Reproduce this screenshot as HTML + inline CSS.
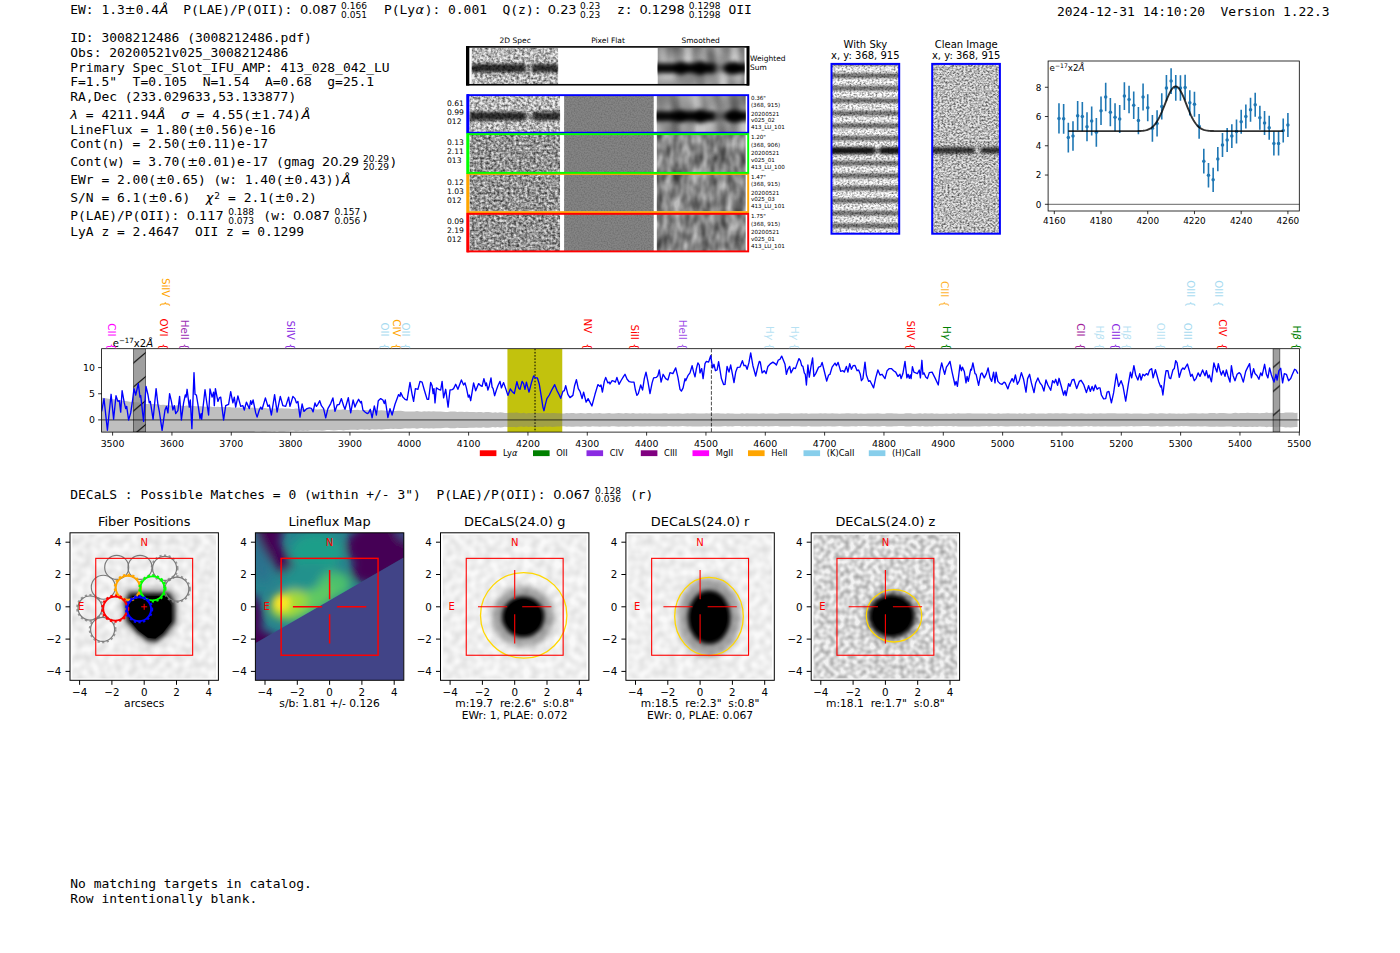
<!DOCTYPE html>
<html><head><meta charset="utf-8"><title>ELiXer detection report 3008212486</title>
<style>
html,body{margin:0;padding:0;background:#fff;}
body{width:1400px;height:953px;overflow:hidden;}
svg{display:block;}
.m{font-family:"DejaVu Sans Mono","Liberation Mono",monospace;}
.s{font-family:"DejaVu Sans","Liberation Sans",sans-serif;}
text{white-space:pre;}
</style></head><body>
<svg width="1400" height="953" viewBox="0 0 1400 953">
<defs>
<filter id="nz" x="0" y="0" width="100%" height="100%" color-interpolation-filters="sRGB">
<feTurbulence type="fractalNoise" baseFrequency="0.36 0.4" numOctaves="2" seed="3" result="t"/>
<feColorMatrix in="t" type="matrix" values="0 0 0 0 0  0 0 0 0 0  0 0 0 0 0  1.3 0 0 0 -0.42"/>
<feComposite in2="SourceGraphic" operator="in"/>
</filter>
<filter id="nzB" x="0" y="0" width="100%" height="100%" color-interpolation-filters="sRGB">
<feTurbulence type="fractalNoise" baseFrequency="0.36 0.4" numOctaves="2" seed="23" result="t"/>
<feColorMatrix in="t" type="matrix" values="0 0 0 0 0  0 0 0 0 0  0 0 0 0 0  1.15 0 0 0 -0.19"/>
<feComposite in2="SourceGraphic" operator="in"/>
</filter>
<filter id="nz2" x="0" y="0" width="100%" height="100%" color-interpolation-filters="sRGB">
<feTurbulence type="fractalNoise" baseFrequency="0.5 0.55" numOctaves="2" seed="11" result="t"/>
<feColorMatrix in="t" type="matrix" values="0 0 0 0 0  0 0 0 0 0  0 0 0 0 0  1.3 0 0 0 -0.45"/>
<feComposite in2="SourceGraphic" operator="in"/>
</filter>
<filter id="nz3" x="0" y="0" width="100%" height="100%" color-interpolation-filters="sRGB">
<feTurbulence type="fractalNoise" baseFrequency="0.5 0.55" numOctaves="2" seed="14" result="t"/>
<feColorMatrix in="t" type="matrix" values="0 0 0 0 0  0 0 0 0 0  0 0 0 0 0  1.2 0 0 0 -0.48"/>
<feComposite in2="SourceGraphic" operator="in"/>
</filter>
<filter id="nzs" x="0" y="0" width="100%" height="100%" color-interpolation-filters="sRGB">
<feTurbulence type="fractalNoise" baseFrequency="0.11 0.06" numOctaves="2" seed="5" result="t"/>
<feColorMatrix in="t" type="matrix" values="0 0 0 0 0  0 0 0 0 0  0 0 0 0 0  1.0 0 0 0 -0.2"/>
<feComposite in2="SourceGraphic" operator="in"/>
</filter>
<filter id="nzv" x="0" y="0" width="100%" height="100%" color-interpolation-filters="sRGB">
<feTurbulence type="fractalNoise" baseFrequency="0.085 0.035" numOctaves="1" seed="9" result="t"/>
<feColorMatrix in="t" type="matrix" values="0 0 0 0 0  0 0 0 0 0  0 0 0 0 0  1.1 0 0 0 -0.32"/>
<feComposite in2="SourceGraphic" operator="in"/>
</filter>
<filter id="nzf" x="0" y="0" width="100%" height="100%" color-interpolation-filters="sRGB">
<feTurbulence type="fractalNoise" baseFrequency="0.7" numOctaves="1" seed="7" result="t"/>
<feColorMatrix in="t" type="matrix" values="0 0 0 0 0  0 0 0 0 0  0 0 0 0 0  0.4 0 0 0 -0.16"/>
<feComposite in2="SourceGraphic" operator="in"/>
</filter>
<filter id="b1" x="-20%" y="-50%" width="140%" height="200%"><feGaussianBlur stdDeviation="1.6 1.4"/></filter>
<filter id="b2" x="-20%" y="-50%" width="140%" height="200%"><feGaussianBlur stdDeviation="2.6 2.0"/></filter>
<linearGradient id="band" x1="0" y1="0" x2="0" y2="1">
<stop offset="0" stop-color="#000" stop-opacity="0"/><stop offset="0.5" stop-color="#000" stop-opacity="0.85"/><stop offset="1" stop-color="#000" stop-opacity="0"/></linearGradient>

<linearGradient id="stripes" x1="0" y1="0" x2="0" y2="12.5" gradientUnits="userSpaceOnUse" spreadMethod="repeat" gradientTransform="translate(0,6.95)">
<stop offset="0" stop-color="#000" stop-opacity="0.0"/><stop offset="0.18" stop-color="#000" stop-opacity="0.03"/><stop offset="0.42" stop-color="#000" stop-opacity="0.5"/><stop offset="0.58" stop-color="#000" stop-opacity="0.5"/><stop offset="0.82" stop-color="#000" stop-opacity="0.03"/><stop offset="1" stop-color="#000" stop-opacity="0.0"/></linearGradient>
<pattern id="hat" width="28.2" height="24" patternUnits="userSpaceOnUse" patternTransform="translate(133.5,339)"><path d="M-2.82 26.4L31.02 -2.4M-2.82 2.4L2.82 -2.4M25.38 26.4L31.02 21.6" stroke="#000" stroke-width="1"/></pattern>
<pattern id="hat2" width="28.2" height="24" patternUnits="userSpaceOnUse" patternTransform="translate(1273.1,343.5)"><path d="M-2.82 26.4L31.02 -2.4M-2.82 2.4L2.82 -2.4M25.38 26.4L31.02 21.6" stroke="#000" stroke-width="1"/></pattern>
<filter id="sky" x="0" y="0" width="100%" height="100%" color-interpolation-filters="sRGB">
<feTurbulence type="fractalNoise" baseFrequency="0.13" numOctaves="1" seed="2" result="t"/>
<feColorMatrix in="t" type="matrix" values="0 0 0 0 0  0 0 0 0 0  0 0 0 0 0  0.18 0 0 0 -0.05"/>
<feComposite in2="SourceGraphic" operator="in"/></filter>
<filter id="skyz" x="0" y="0" width="100%" height="100%" color-interpolation-filters="sRGB">
<feTurbulence type="fractalNoise" baseFrequency="0.2" numOctaves="1" seed="8" result="t"/>
<feColorMatrix in="t" type="matrix" values="0 0 0 0 0  0 0 0 0 0  0 0 0 0 0  0.62 0 0 0 -0.2"/>
<feComposite in2="SourceGraphic" operator="in"/></filter>
<filter id="gb" x="-50%" y="-50%" width="200%" height="200%"><feGaussianBlur stdDeviation="3.2"/></filter>
<filter id="gb2" x="-50%" y="-50%" width="200%" height="200%"><feGaussianBlur stdDeviation="2.2"/></filter>
<filter id="lb" x="-50%" y="-50%" width="200%" height="200%"><feGaussianBlur stdDeviation="4.6"/></filter>

</defs>
<rect width="1400" height="953" fill="#fff"/>
<text class="m" x="70.30" y="13.80" font-size="12.94" xml:space="preserve">EW: 1.3</text>
<text class="s" x="124.83" y="13.80" font-size="12.94">±</text>
<text class="m" x="135.68" y="13.80" font-size="12.94" xml:space="preserve">0.4</text>
<text class="s" x="159.55" y="13.80" font-size="12.94" font-style="italic">Å</text>
<text class="m" x="183.30" y="13.80" font-size="12.94" xml:space="preserve">P(LAE)/P(OII): </text>
<text class="s" x="300.00" y="13.80" font-size="12.94">0.087</text>
<text class="s" x="341.10" y="9.00" font-size="9.06">0.166</text>
<text class="s" x="341.10" y="17.60" font-size="9.06">0.051</text>
<text class="m" x="384.00" y="13.80" font-size="12.94" xml:space="preserve">P(Ly</text>
<text class="s" x="415.46" y="13.80" font-size="12.94" font-style="italic">α</text>
<text class="m" x="424.66" y="13.80" font-size="12.94" xml:space="preserve">): 0.001  Q(z): </text>
<text class="s" x="547.80" y="13.80" font-size="12.94">0.23</text>
<text class="s" x="580.10" y="9.00" font-size="9.06">0.23</text>
<text class="s" x="580.10" y="17.60" font-size="9.06">0.23</text>
<text class="m" x="617.00" y="13.80" font-size="12.94" xml:space="preserve">z: </text>
<text class="s" x="639.40" y="13.80" font-size="12.94">0.1298</text>
<text class="s" x="688.80" y="9.00" font-size="9.06">0.1298</text>
<text class="s" x="688.80" y="17.60" font-size="9.06">0.1298</text>
<text class="m" x="728.50" y="13.80" font-size="12.94" xml:space="preserve">OII</text>
<text class="m" x="1057.00" y="16.40" font-size="12.94" xml:space="preserve">2024-12-31 14:10:20  Version 1.22.3</text>
<text class="m" x="70.30" y="42.20" font-size="12.94" xml:space="preserve">ID: 3008212486 (3008212486.pdf)</text>
<text class="m" x="70.30" y="56.70" font-size="12.94" xml:space="preserve">Obs: 20200521v025_3008212486</text>
<text class="m" x="70.30" y="71.50" font-size="12.94" xml:space="preserve">Primary Spec_Slot_IFU_AMP: 413_028_042_LU</text>
<text class="m" x="70.30" y="86.40" font-size="12.94" xml:space="preserve">F=1.5"  T=0.105  N=1.54  A=0.68  g=25.1</text>
<text class="m" x="70.30" y="101.10" font-size="12.94" xml:space="preserve">RA,Dec (233.029633,53.133877)</text>
<text class="s" x="70.30" y="118.80" font-size="12.94" font-style="italic">λ</text>
<text class="m" x="78.09" y="118.80" font-size="12.94" xml:space="preserve"> = 4211.94</text>
<text class="s" x="156.50" y="118.80" font-size="12.94" font-style="italic">Å</text>
<text class="s" x="181.00" y="118.80" font-size="12.94" font-style="italic">σ</text>
<text class="m" x="188.79" y="118.80" font-size="12.94" xml:space="preserve"> = 4.55(</text>
<text class="s" x="251.11" y="118.80" font-size="12.94">±</text>
<text class="m" x="261.95" y="118.80" font-size="12.94" xml:space="preserve">1.74)</text>
<text class="s" x="301.41" y="118.80" font-size="12.94" font-style="italic">Å</text>
<text class="m" x="70.30" y="133.50" font-size="12.94" xml:space="preserve">LineFlux = 1.80(</text>
<text class="s" x="194.95" y="133.50" font-size="12.94">±</text>
<text class="m" x="205.79" y="133.50" font-size="12.94" xml:space="preserve">0.56)e-16</text>
<text class="m" x="70.30" y="148.00" font-size="12.94" xml:space="preserve">Cont(n) = 2.50(</text>
<text class="s" x="187.16" y="148.00" font-size="12.94">±</text>
<text class="m" x="198.00" y="148.00" font-size="12.94" xml:space="preserve">0.11)e-17</text>
<text class="m" x="70.30" y="166.40" font-size="12.94" xml:space="preserve">Cont(w) = 3.70(</text>
<text class="s" x="187.16" y="166.40" font-size="12.94">±</text>
<text class="m" x="198.00" y="166.40" font-size="12.94" xml:space="preserve">0.01)e-17 (gmag </text>
<text class="s" x="322.00" y="166.40" font-size="12.94">20.29</text>
<text class="s" x="363.10" y="161.60" font-size="9.06">20.29</text>
<text class="s" x="363.10" y="170.20" font-size="9.06">20.29</text>
<text class="m" x="389.40" y="166.40" font-size="12.94" xml:space="preserve">)</text>
<text class="m" x="70.30" y="184.40" font-size="12.94" xml:space="preserve">EWr = 2.00(</text>
<text class="s" x="156.00" y="184.40" font-size="12.94">±</text>
<text class="m" x="166.84" y="184.40" font-size="12.94" xml:space="preserve">0.65) (w: 1.40(</text>
<text class="s" x="283.70" y="184.40" font-size="12.94">±</text>
<text class="m" x="294.54" y="184.40" font-size="12.94" xml:space="preserve">0.43))</text>
<text class="s" x="341.78" y="184.40" font-size="12.94" font-style="italic">Å</text>
<text class="m" x="70.30" y="201.80" font-size="12.94" xml:space="preserve">S/N = 6.1(</text>
<text class="s" x="148.21" y="201.80" font-size="12.94">±</text>
<text class="m" x="159.05" y="201.80" font-size="12.94" xml:space="preserve">0.6)  </text>
<text class="s" x="205.79" y="201.80" font-size="12.94" font-style="italic">χ</text>
<text class="s" x="214.29" y="199.00" font-size="9">2</text>
<text class="m" x="220.29" y="201.80" font-size="12.94" xml:space="preserve"> = 2.1(</text>
<text class="s" x="274.83" y="201.80" font-size="12.94">±</text>
<text class="m" x="285.67" y="201.80" font-size="12.94" xml:space="preserve">0.2)</text>
<text class="m" x="70.30" y="219.80" font-size="12.94" xml:space="preserve">P(LAE)/P(OII): </text>
<text class="s" x="186.70" y="219.80" font-size="12.94">0.117</text>
<text class="s" x="228.20" y="215.00" font-size="9.06">0.188</text>
<text class="s" x="228.20" y="223.60" font-size="9.06">0.073</text>
<text class="m" x="263.35" y="219.80" font-size="12.94" xml:space="preserve">(w: </text>
<text class="s" x="292.90" y="219.80" font-size="12.94">0.087</text>
<text class="s" x="334.40" y="215.00" font-size="9.06">0.157</text>
<text class="s" x="334.40" y="223.60" font-size="9.06">0.056</text>
<text class="m" x="361.25" y="219.80" font-size="12.94" xml:space="preserve">)</text>
<text class="m" x="70.30" y="236.00" font-size="12.94" xml:space="preserve">LyA z = 2.4647  OII z = 0.1299</text>
<text class="m" x="70.30" y="498.50" font-size="12.94" xml:space="preserve">DECaLS : Possible Matches = 0 (within +/- 3")  P(LAE)/P(OII): </text>
<text class="s" x="553.20" y="498.50" font-size="12.94">0.067</text>
<text class="s" x="595.00" y="493.70" font-size="9.06">0.128</text>
<text class="s" x="595.00" y="502.30" font-size="9.06">0.036</text>
<text class="m" x="630.00" y="498.50" font-size="12.94" xml:space="preserve">(r)</text>
<text class="m" x="70.30" y="888.30" font-size="12.94" xml:space="preserve">No matching targets in catalog.</text>
<text class="m" x="70.30" y="903.00" font-size="12.94" xml:space="preserve">Row intentionally blank.</text>
<text class="s" x="515.20" y="42.60" font-size="7.5" text-anchor="middle">2D Spec</text>
<text class="s" x="608.00" y="42.60" font-size="7.5" text-anchor="middle">Pixel Flat</text>
<text class="s" x="700.70" y="42.60" font-size="7.5" text-anchor="middle">Smoothed</text>
<clipPath id="c0"><rect x="471.50" y="48.00" width="86.80" height="36.00"/></clipPath>
<g clip-path="url(#c0)">
<rect x="471.50" y="48.00" width="86.80" height="36.00" fill="#ececec"/>
<rect x="471.50" y="48.00" width="86.80" height="36.00" fill="#000" filter="url(#nz)"/>
<g filter="url(#b1)" opacity="1.0">
<rect x="471.50" y="63.96" width="53.82" height="8.4" fill="#000" opacity="0.78"/>
<rect x="532.26" y="63.96" width="26.04" height="8.4" fill="#000" opacity="0.76"/>
<rect x="525.32" y="64.96" width="6.94" height="6" fill="#000" opacity="0.2"/>
</g>
</g>
<clipPath id="c0s"><rect x="657.50" y="48.00" width="87.20" height="36.00"/></clipPath>
<g clip-path="url(#c0s)">
<rect x="657.50" y="48.00" width="87.20" height="36.00" fill="#c4c4c4"/>
<rect x="657.50" y="48.00" width="87.20" height="36.00" fill="#000" filter="url(#nzv)"/>
<g filter="url(#b2)">
<rect x="653.50" y="63.16" width="61.55" height="10" fill="#000" opacity="0.95"/>
<ellipse cx="700.23" cy="68.16" rx="8" ry="7" fill="#000"/>
<ellipse cx="681.04" cy="68.16" rx="8" ry="6.4" fill="#000"/>
<ellipse cx="733.36" cy="68.16" rx="10" ry="6.4" fill="#000"/>
<rect x="725.52" y="63.16" width="26.16" height="10" fill="#000" opacity="0.9"/>
<rect x="715.05" y="64.16" width="10.46" height="8" fill="#000" opacity="0.35"/>
</g>
</g>
<rect x="467" y="46.9" width="281.5" height="37.85" fill="none" stroke="#000" stroke-width="1.6"/>
<rect x="466.0" y="46.1" width="3.3" height="39.45" fill="#000"/>
<rect x="746.5" y="46.1" width="2.8" height="39.45" fill="#000"/>
<text class="s" x="750.00" y="61.20" font-size="7.5">Weighted</text>
<text class="s" x="750.00" y="70.00" font-size="7.5">Sum</text>
<clipPath id="c1"><rect x="469.40" y="95.20" width="90.80" height="37.50"/></clipPath>
<g clip-path="url(#c1)">
<rect x="469.40" y="95.20" width="90.80" height="37.50" fill="#ececec"/>
<rect x="469.40" y="95.20" width="90.80" height="37.50" fill="#000" filter="url(#nz)"/>
<g filter="url(#b1)" opacity="1.0">
<rect x="469.40" y="112.00" width="56.30" height="8.4" fill="#000" opacity="0.78"/>
<rect x="532.96" y="112.00" width="27.24" height="8.4" fill="#000" opacity="0.76"/>
<rect x="525.70" y="113.00" width="7.26" height="6" fill="#000" opacity="0.2"/>
</g>
</g>
<rect x="564.10" y="95.20" width="89.60" height="37.50" fill="#848484"/>
<rect x="564.10" y="95.20" width="89.60" height="37.50" fill="#000" filter="url(#nzf)"/>
<clipPath id="c1s"><rect x="656.60" y="95.20" width="89.20" height="37.50"/></clipPath>
<g clip-path="url(#c1s)">
<rect x="656.60" y="95.20" width="89.20" height="37.50" fill="#c4c4c4"/>
<rect x="656.60" y="95.20" width="89.20" height="37.50" fill="#000" filter="url(#nzv)"/>
<g filter="url(#b2)">
<rect x="652.60" y="111.20" width="62.87" height="10" fill="#000" opacity="0.95"/>
<ellipse cx="700.31" cy="116.20" rx="8" ry="7" fill="#000"/>
<ellipse cx="680.68" cy="116.20" rx="8" ry="6.4" fill="#000"/>
<ellipse cx="734.20" cy="116.20" rx="10" ry="6.4" fill="#000"/>
<rect x="726.18" y="111.20" width="26.76" height="10" fill="#000" opacity="0.9"/>
<rect x="715.47" y="112.20" width="10.70" height="8" fill="#000" opacity="0.35"/>
</g>
</g>
<clipPath id="c2"><rect x="469.40" y="134.60" width="90.80" height="37.50"/></clipPath>
<g clip-path="url(#c2)">
<rect x="469.40" y="134.60" width="90.80" height="37.50" fill="#f0f0f0"/>
<rect x="469.40" y="134.60" width="90.80" height="37.50" fill="#000" filter="url(#nzB)"/>
</g>
<rect x="564.10" y="134.60" width="89.60" height="37.50" fill="#848484"/>
<rect x="564.10" y="134.60" width="89.60" height="37.50" fill="#000" filter="url(#nzf)"/>
<clipPath id="c2s"><rect x="656.60" y="134.60" width="89.20" height="37.50"/></clipPath>
<g clip-path="url(#c2s)">
<rect x="656.60" y="134.60" width="89.20" height="37.50" fill="#bcbcbc"/>
<rect x="656.60" y="134.60" width="89.20" height="37.50" fill="#000" filter="url(#nzs)"/>
</g>
<clipPath id="c3"><rect x="469.40" y="174.00" width="90.80" height="37.50"/></clipPath>
<g clip-path="url(#c3)">
<rect x="469.40" y="174.00" width="90.80" height="37.50" fill="#f0f0f0"/>
<rect x="469.40" y="174.00" width="90.80" height="37.50" fill="#000" filter="url(#nzB)"/>
</g>
<rect x="564.10" y="174.00" width="89.60" height="37.50" fill="#848484"/>
<rect x="564.10" y="174.00" width="89.60" height="37.50" fill="#000" filter="url(#nzf)"/>
<clipPath id="c3s"><rect x="656.60" y="174.00" width="89.20" height="37.50"/></clipPath>
<g clip-path="url(#c3s)">
<rect x="656.60" y="174.00" width="89.20" height="37.50" fill="#bcbcbc"/>
<rect x="656.60" y="174.00" width="89.20" height="37.50" fill="#000" filter="url(#nzs)"/>
</g>
<clipPath id="c4"><rect x="469.40" y="213.60" width="90.80" height="37.50"/></clipPath>
<g clip-path="url(#c4)">
<rect x="469.40" y="213.60" width="90.80" height="37.50" fill="#f0f0f0"/>
<rect x="469.40" y="213.60" width="90.80" height="37.50" fill="#000" filter="url(#nzB)"/>
</g>
<rect x="564.10" y="213.60" width="89.60" height="37.50" fill="#848484"/>
<rect x="564.10" y="213.60" width="89.60" height="37.50" fill="#000" filter="url(#nzf)"/>
<clipPath id="c4s"><rect x="656.60" y="213.60" width="89.20" height="37.50"/></clipPath>
<g clip-path="url(#c4s)">
<rect x="656.60" y="213.60" width="89.20" height="37.50" fill="#bcbcbc"/>
<rect x="656.60" y="213.60" width="89.20" height="37.50" fill="#000" filter="url(#nzs)"/>
</g>
<rect x="467.8" y="173.95" width="280.4" height="38.20" fill="none" stroke="#ffa500" stroke-width="1.9"/>
<rect x="466.3" y="173.00" width="3.0" height="40.10" fill="#ffa500"/>
<rect x="467.8" y="95.15" width="280.4" height="37.60" fill="none" stroke="#0000ff" stroke-width="1.9"/>
<rect x="466.3" y="94.20" width="3.0" height="39.50" fill="#0000ff"/>
<rect x="467.8" y="213.85" width="280.4" height="37.55" fill="none" stroke="#ff0000" stroke-width="1.9"/>
<rect x="466.3" y="212.90" width="3.0" height="39.45" fill="#ff0000"/>
<rect x="467.8" y="134.15" width="280.4" height="38.70" fill="none" stroke="#00ff00" stroke-width="1.9"/>
<rect x="466.3" y="133.20" width="3.0" height="40.60" fill="#00ff00"/>
<text class="s" x="447.00" y="105.80" font-size="7.6">0.61</text>
<text class="s" x="447.00" y="114.75" font-size="7.6">0.99</text>
<text class="s" x="447.00" y="123.70" font-size="7.6">012</text>
<text class="s" x="750.90" y="99.80" font-size="5.6">0.36"</text>
<text class="s" x="750.90" y="107.10" font-size="5.6">(368, 915)</text>
<text class="s" x="750.90" y="115.90" font-size="5.6">20200521</text>
<text class="s" x="750.90" y="122.30" font-size="5.6">v025_02</text>
<text class="s" x="750.90" y="129.40" font-size="5.6">413_LU_101</text>
<text class="s" x="447.00" y="145.20" font-size="7.6">0.13</text>
<text class="s" x="447.00" y="154.15" font-size="7.6">2.11</text>
<text class="s" x="447.00" y="163.10" font-size="7.6">013</text>
<text class="s" x="750.90" y="139.20" font-size="5.6">1.20"</text>
<text class="s" x="750.90" y="146.50" font-size="5.6">(368, 906)</text>
<text class="s" x="750.90" y="155.30" font-size="5.6">20200521</text>
<text class="s" x="750.90" y="161.70" font-size="5.6">v025_01</text>
<text class="s" x="750.90" y="168.80" font-size="5.6">413_LU_100</text>
<text class="s" x="447.00" y="184.60" font-size="7.6">0.12</text>
<text class="s" x="447.00" y="193.55" font-size="7.6">1.03</text>
<text class="s" x="447.00" y="202.50" font-size="7.6">012</text>
<text class="s" x="750.90" y="178.60" font-size="5.6">1.47"</text>
<text class="s" x="750.90" y="185.90" font-size="5.6">(368, 915)</text>
<text class="s" x="750.90" y="194.70" font-size="5.6">20200521</text>
<text class="s" x="750.90" y="201.10" font-size="5.6">v025_03</text>
<text class="s" x="750.90" y="208.20" font-size="5.6">413_LU_101</text>
<text class="s" x="447.00" y="224.20" font-size="7.6">0.09</text>
<text class="s" x="447.00" y="233.15" font-size="7.6">2.19</text>
<text class="s" x="447.00" y="242.10" font-size="7.6">012</text>
<text class="s" x="750.90" y="218.20" font-size="5.6">1.75"</text>
<text class="s" x="750.90" y="225.50" font-size="5.6">(368, 915)</text>
<text class="s" x="750.90" y="234.30" font-size="5.6">20200521</text>
<text class="s" x="750.90" y="240.70" font-size="5.6">v025_01</text>
<text class="s" x="750.90" y="247.80" font-size="5.6">413_LU_101</text>
<text class="s" x="865.30" y="47.80" font-size="10" text-anchor="middle">With Sky</text>
<text class="s" x="865.30" y="58.70" font-size="10" text-anchor="middle">x, y: 368, 915</text>
<text class="s" x="966.20" y="47.80" font-size="10" text-anchor="middle">Clean Image</text>
<text class="s" x="966.20" y="58.70" font-size="10" text-anchor="middle">x, y: 368, 915</text>
<clipPath id="cs"><rect x="831.6" y="64.0" width="67.5" height="169.6"/></clipPath><g clip-path="url(#cs)">
<rect x="831.60" y="64.00" width="67.50" height="169.60" fill="#ffffff"/>
<rect x="831.60" y="64.00" width="67.50" height="169.60" fill="#000" filter="url(#nz3)"/>
<rect x="831.6" y="64.0" width="67.5" height="169.6" fill="url(#stripes)"/>
<g filter="url(#b1)"><rect x="828.6" y="146.9" width="45.525" height="7.4" fill="#000" opacity="0.8"/><rect x="880.2" y="146.9" width="23.25" height="7.4" fill="#000" opacity="0.8"/></g>
</g>
<rect x="831.5" y="63.9" width="67.7" height="169.79999999999998" fill="none" stroke="#0000ff" stroke-width="2"/>
<clipPath id="cc"><rect x="932.3" y="64.0" width="67.5" height="169.6"/></clipPath><g clip-path="url(#cc)">
<rect x="932.30" y="64.00" width="67.50" height="169.60" fill="#e6e6e6"/>
<rect x="932.30" y="64.00" width="67.50" height="169.60" fill="#000" filter="url(#nz2)"/>
<g filter="url(#b1)"><rect x="929.3" y="147.2" width="45.525" height="6.4" fill="#000" opacity="0.75"/><rect x="980.9" y="147.2" width="23.25" height="6.4" fill="#000" opacity="0.75"/></g>
</g>
<rect x="932.1999999999999" y="63.9" width="67.7" height="169.79999999999998" fill="none" stroke="#0000ff" stroke-width="2"/>
<rect x="1048.1" y="61.0" width="251.20" height="150.00" fill="#fff"/>
<line x1="1048.1" y1="204.30" x2="1299.3" y2="204.30" stroke="#000" stroke-width="1" opacity="0.6"/>
<path d="M1058.97 103.35V133.49M1063.64 103.88V133.84M1068.32 122.69V152.48M1072.99 121.17V150.78M1077.66 100.92V130.36M1082.33 101.89V131.15M1087.00 112.22V141.30M1091.68 106.60V135.51M1096.35 117.95V146.69M1101.02 96.39V124.95M1105.69 82.87V111.25M1110.36 98.03V126.23M1115.04 103.24V131.27M1119.71 105.08V132.93M1124.38 82.20V109.88M1129.05 85.65V113.16M1133.72 91.59V118.92M1138.40 107.04V134.19M1143.07 83.57V110.55M1147.74 94.34V121.14M1152.41 115.06V141.68M1157.08 110.17V136.62M1161.76 93.29V119.56M1166.43 74.94V101.04M1171.10 68.15V94.08M1175.77 75.12V100.87M1180.44 75.20V100.78M1185.12 74.85V100.25M1189.79 90.16V115.38M1194.46 91.71V116.75M1199.13 113.89V138.76M1203.80 148.79V173.49M1208.48 163.07V187.59M1213.15 167.70V192.04M1217.82 147.01V171.18M1222.49 133.05V157.05M1227.16 128.08V152.07M1231.84 124.13V148.12M1236.51 119.45V143.44M1241.18 109.79V133.78M1245.85 104.52V128.52M1250.52 97.65V121.64M1255.20 92.67V116.67M1259.87 105.69V129.69M1264.54 110.96V134.95M1269.21 115.79V139.78M1273.88 131.44V155.44M1278.56 131.44V155.44M1283.23 118.42V142.42M1287.90 113.01V137.00" stroke="#1f77b4" stroke-width="1.6" fill="none"/>
<circle cx="1058.97" cy="118.42" r="1.75" fill="#1f77b4"/>
<circle cx="1063.64" cy="118.86" r="1.75" fill="#1f77b4"/>
<circle cx="1068.32" cy="137.59" r="1.75" fill="#1f77b4"/>
<circle cx="1072.99" cy="135.98" r="1.75" fill="#1f77b4"/>
<circle cx="1077.66" cy="115.64" r="1.75" fill="#1f77b4"/>
<circle cx="1082.33" cy="116.52" r="1.75" fill="#1f77b4"/>
<circle cx="1087.00" cy="126.76" r="1.75" fill="#1f77b4"/>
<circle cx="1091.68" cy="121.06" r="1.75" fill="#1f77b4"/>
<circle cx="1096.35" cy="132.32" r="1.75" fill="#1f77b4"/>
<circle cx="1101.02" cy="110.67" r="1.75" fill="#1f77b4"/>
<circle cx="1105.69" cy="97.06" r="1.75" fill="#1f77b4"/>
<circle cx="1110.36" cy="112.13" r="1.75" fill="#1f77b4"/>
<circle cx="1115.04" cy="117.25" r="1.75" fill="#1f77b4"/>
<circle cx="1119.71" cy="119.01" r="1.75" fill="#1f77b4"/>
<circle cx="1124.38" cy="96.04" r="1.75" fill="#1f77b4"/>
<circle cx="1129.05" cy="99.40" r="1.75" fill="#1f77b4"/>
<circle cx="1133.72" cy="105.25" r="1.75" fill="#1f77b4"/>
<circle cx="1138.40" cy="120.62" r="1.75" fill="#1f77b4"/>
<circle cx="1143.07" cy="97.06" r="1.75" fill="#1f77b4"/>
<circle cx="1147.74" cy="107.74" r="1.75" fill="#1f77b4"/>
<circle cx="1152.41" cy="128.37" r="1.75" fill="#1f77b4"/>
<circle cx="1157.08" cy="123.40" r="1.75" fill="#1f77b4"/>
<circle cx="1161.76" cy="106.43" r="1.75" fill="#1f77b4"/>
<circle cx="1166.43" cy="87.99" r="1.75" fill="#1f77b4"/>
<circle cx="1171.10" cy="81.12" r="1.75" fill="#1f77b4"/>
<circle cx="1175.77" cy="87.99" r="1.75" fill="#1f77b4"/>
<circle cx="1180.44" cy="87.99" r="1.75" fill="#1f77b4"/>
<circle cx="1185.12" cy="87.55" r="1.75" fill="#1f77b4"/>
<circle cx="1189.79" cy="102.77" r="1.75" fill="#1f77b4"/>
<circle cx="1194.46" cy="104.23" r="1.75" fill="#1f77b4"/>
<circle cx="1199.13" cy="126.32" r="1.75" fill="#1f77b4"/>
<circle cx="1203.80" cy="161.14" r="1.75" fill="#1f77b4"/>
<circle cx="1208.48" cy="175.33" r="1.75" fill="#1f77b4"/>
<circle cx="1213.15" cy="179.87" r="1.75" fill="#1f77b4"/>
<circle cx="1217.82" cy="159.09" r="1.75" fill="#1f77b4"/>
<circle cx="1222.49" cy="145.05" r="1.75" fill="#1f77b4"/>
<circle cx="1227.16" cy="140.07" r="1.75" fill="#1f77b4"/>
<circle cx="1231.84" cy="136.12" r="1.75" fill="#1f77b4"/>
<circle cx="1236.51" cy="131.44" r="1.75" fill="#1f77b4"/>
<circle cx="1241.18" cy="121.79" r="1.75" fill="#1f77b4"/>
<circle cx="1245.85" cy="116.52" r="1.75" fill="#1f77b4"/>
<circle cx="1250.52" cy="109.64" r="1.75" fill="#1f77b4"/>
<circle cx="1255.20" cy="104.67" r="1.75" fill="#1f77b4"/>
<circle cx="1259.87" cy="117.69" r="1.75" fill="#1f77b4"/>
<circle cx="1264.54" cy="122.96" r="1.75" fill="#1f77b4"/>
<circle cx="1269.21" cy="127.79" r="1.75" fill="#1f77b4"/>
<circle cx="1273.88" cy="143.44" r="1.75" fill="#1f77b4"/>
<circle cx="1278.56" cy="143.44" r="1.75" fill="#1f77b4"/>
<circle cx="1283.23" cy="130.42" r="1.75" fill="#1f77b4"/>
<circle cx="1287.90" cy="125.01" r="1.75" fill="#1f77b4"/>
<polyline points="1068.32,131.15 1069.48,131.15 1070.65,131.15 1071.82,131.15 1072.99,131.15 1074.16,131.15 1075.32,131.15 1076.49,131.15 1077.66,131.15 1078.83,131.15 1080.00,131.15 1081.16,131.15 1082.33,131.15 1083.50,131.15 1084.67,131.15 1085.84,131.15 1087.00,131.15 1088.17,131.15 1089.34,131.15 1090.51,131.15 1091.68,131.15 1092.84,131.15 1094.01,131.15 1095.18,131.15 1096.35,131.15 1097.52,131.15 1098.68,131.15 1099.85,131.15 1101.02,131.15 1102.19,131.15 1103.36,131.15 1104.52,131.15 1105.69,131.15 1106.86,131.15 1108.03,131.15 1109.20,131.15 1110.36,131.15 1111.53,131.15 1112.70,131.15 1113.87,131.15 1115.04,131.15 1116.20,131.15 1117.37,131.15 1118.54,131.15 1119.71,131.15 1120.88,131.15 1122.04,131.15 1123.21,131.15 1124.38,131.15 1125.55,131.15 1126.72,131.15 1127.88,131.15 1129.05,131.15 1130.22,131.15 1131.39,131.14 1132.56,131.14 1133.72,131.13 1134.89,131.12 1136.06,131.11 1137.23,131.08 1138.40,131.05 1139.56,131.01 1140.73,130.95 1141.90,130.86 1143.07,130.74 1144.24,130.58 1145.40,130.37 1146.57,130.08 1147.74,129.72 1148.91,129.25 1150.08,128.66 1151.24,127.93 1152.41,127.03 1153.58,125.95 1154.75,124.65 1155.92,123.14 1157.08,121.38 1158.25,119.39 1159.42,117.16 1160.59,114.71 1161.76,112.06 1162.92,109.24 1164.09,106.32 1165.26,103.34 1166.43,100.38 1167.60,97.51 1168.76,94.82 1169.93,92.38 1171.10,90.27 1172.27,88.57 1173.44,87.33 1174.60,86.59 1175.77,86.39 1176.94,86.72 1178.11,87.58 1179.28,88.94 1180.44,90.74 1181.61,92.94 1182.78,95.44 1183.95,98.19 1185.12,101.08 1186.28,104.06 1187.45,107.03 1188.62,109.93 1189.79,112.71 1190.96,115.32 1192.12,117.72 1193.29,119.89 1194.46,121.83 1195.63,123.52 1196.80,124.98 1197.96,126.23 1199.13,127.26 1200.30,128.12 1201.47,128.82 1202.64,129.37 1203.80,129.82 1204.97,130.16 1206.14,130.42 1207.31,130.62 1208.48,130.77 1209.64,130.88 1210.81,130.96 1211.98,131.02 1213.15,131.06 1214.32,131.09 1215.48,131.11 1216.65,131.12 1217.82,131.13 1218.99,131.14 1220.16,131.14 1221.32,131.15 1222.49,131.15 1223.66,131.15 1224.83,131.15 1226.00,131.15 1227.16,131.15 1228.33,131.15 1229.50,131.15 1230.67,131.15 1231.84,131.15 1233.00,131.15 1234.17,131.15 1235.34,131.15 1236.51,131.15 1237.68,131.15 1238.84,131.15 1240.01,131.15 1241.18,131.15 1242.35,131.15 1243.52,131.15 1244.68,131.15 1245.85,131.15 1247.02,131.15 1248.19,131.15 1249.36,131.15 1250.52,131.15 1251.69,131.15 1252.86,131.15 1254.03,131.15 1255.20,131.15 1256.36,131.15 1257.53,131.15 1258.70,131.15 1259.87,131.15 1261.04,131.15 1262.20,131.15 1263.37,131.15 1264.54,131.15 1265.71,131.15 1266.88,131.15 1268.04,131.15 1269.21,131.15 1270.38,131.15 1271.55,131.15 1272.72,131.15 1273.88,131.15 1275.05,131.15 1276.22,131.15 1277.39,131.15 1278.56,131.15 1279.72,131.15 1280.89,131.15 1282.06,131.15 1283.23,131.15" fill="none" stroke="#000" stroke-opacity="0.8" stroke-width="1.9" stroke-linejoin="round"/>
<rect x="1048.1" y="61.0" width="251.20" height="150.00" fill="none" stroke="#000" stroke-width="0.8"/>
<text class="s" x="1054.30" y="224.30" font-size="8.9" text-anchor="middle">4160</text>
<text class="s" x="1101.02" y="224.30" font-size="8.9" text-anchor="middle">4180</text>
<text class="s" x="1147.74" y="224.30" font-size="8.9" text-anchor="middle">4200</text>
<text class="s" x="1194.46" y="224.30" font-size="8.9" text-anchor="middle">4220</text>
<text class="s" x="1241.18" y="224.30" font-size="8.9" text-anchor="middle">4240</text>
<text class="s" x="1287.90" y="224.30" font-size="8.9" text-anchor="middle">4260</text>
<text class="s" x="1041.40" y="207.60" font-size="8.9" text-anchor="end">0</text>
<text class="s" x="1041.40" y="178.34" font-size="8.9" text-anchor="end">2</text>
<text class="s" x="1041.40" y="149.08" font-size="8.9" text-anchor="end">4</text>
<text class="s" x="1041.40" y="119.82" font-size="8.9" text-anchor="end">6</text>
<text class="s" x="1041.40" y="90.56" font-size="8.9" text-anchor="end">8</text>
<path d="M1054.30 211.0v3.2M1101.02 211.0v3.2M1147.74 211.0v3.2M1194.46 211.0v3.2M1241.18 211.0v3.2M1287.90 211.0v3.2M1048.1 204.30h-3.2M1048.1 175.04h-3.2M1048.1 145.78h-3.2M1048.1 116.52h-3.2M1048.1 87.26h-3.2" stroke="#000" stroke-width="0.8"/>
<text class="s" x="1049.60" y="71.40" font-size="8.7">e<tspan font-size="6.09" dy="-3.22">−17</tspan><tspan dy="3.22">x2</tspan><tspan font-style="italic">Å</tspan></text>
<clipPath id="csp"><rect x="101.6" y="348.7" width="1197.90" height="83.40"/></clipPath>
<g clip-path="url(#csp)">
<rect x="507.42" y="348.7" width="54.83" height="83.40" fill="#bfbf00" fill-opacity="0.95"/>
<polygon points="101.3,397.6 103.7,398.0 106.1,398.2 108.4,398.7 110.8,399.1 113.2,399.2 115.6,399.2 117.9,399.7 120.3,400.0 122.7,400.7 125.1,400.9 127.4,401.3 129.8,401.7 132.2,402.1 134.6,402.3 136.9,402.2 139.3,402.6 141.7,402.9 144.0,403.2 146.4,403.9 148.8,404.1 151.2,404.0 153.5,404.1 155.9,404.2 158.3,404.3 160.7,404.9 163.0,404.8 165.4,404.9 167.8,405.1 170.2,405.5 172.5,405.4 174.9,405.7 177.3,405.3 179.6,405.4 182.0,405.7 184.4,405.9 186.8,405.6 189.1,405.9 191.5,405.8 193.9,405.9 196.3,406.2 198.6,406.3 201.0,406.3 203.4,406.5 205.8,406.7 208.1,406.7 210.5,406.5 212.9,407.0 215.2,407.1 217.6,406.8 220.0,407.1 222.4,407.0 224.7,407.1 227.1,407.3 229.5,407.0 231.9,407.6 234.2,407.5 236.6,407.7 239.0,407.5 241.4,407.7 243.7,407.7 246.1,407.6 248.5,407.9 250.9,407.8 253.2,407.6 255.6,408.2 258.0,408.3 260.3,408.2 262.7,408.0 265.1,408.1 267.5,408.4 269.8,408.4 272.2,408.6 274.6,408.4 277.0,408.8 279.3,408.4 281.7,408.3 284.1,408.4 286.5,408.6 288.8,408.5 291.2,409.1 293.6,409.0 295.9,408.6 298.3,408.8 300.7,409.0 303.1,408.7 305.4,409.0 307.8,408.9 310.2,409.2 312.6,409.3 314.9,409.2 317.3,409.4 319.7,409.3 322.1,409.0 324.4,409.4 326.8,409.7 329.2,409.7 331.5,409.6 333.9,409.3 336.3,409.6 338.7,409.7 341.0,409.8 343.4,409.3 345.8,409.7 348.2,409.9 350.5,410.0 352.9,410.1 355.3,410.1 357.7,409.8 360.0,410.2 362.4,410.3 364.8,410.1 367.1,410.3 369.5,409.9 371.9,410.5 374.3,410.3 376.6,410.2 379.0,410.5 381.4,410.2 383.8,410.6 386.1,410.8 388.5,410.8 390.9,411.1 393.3,410.9 395.6,411.1 398.0,410.7 400.4,410.8 402.7,411.1 405.1,411.5 407.5,411.4 409.9,411.4 412.2,411.5 414.6,411.5 417.0,411.1 419.4,411.6 421.7,411.7 424.1,411.2 426.5,411.5 428.9,411.2 431.2,411.6 433.6,411.3 436.0,411.5 438.3,411.5 440.7,411.5 443.1,411.7 445.5,412.0 447.8,412.0 450.2,411.6 452.6,411.6 455.0,411.6 457.3,412.0 459.7,411.8 462.1,411.8 464.5,411.9 466.8,411.8 469.2,412.0 471.6,412.0 474.0,412.0 476.3,412.3 478.7,412.0 481.1,412.0 483.4,412.6 485.8,412.1 488.2,412.1 490.6,412.3 492.9,412.8 495.3,412.3 497.7,412.8 500.1,412.3 502.4,412.5 504.8,413.0 507.2,412.9 509.6,412.7 511.9,412.8 514.3,412.7 516.7,412.6 519.0,413.1 521.4,413.3 523.8,412.8 526.2,413.4 528.5,412.9 530.9,413.3 533.3,412.9 535.7,412.9 538.0,412.9 540.4,413.1 542.8,412.9 545.2,413.3 547.5,413.0 549.9,413.3 552.3,412.9 554.6,413.0 557.0,413.2 559.4,413.2 561.8,413.5 564.1,413.5 566.5,413.1 568.9,413.2 571.3,413.0 573.6,413.1 576.0,413.4 578.4,413.3 580.8,413.1 583.1,413.2 585.5,413.5 587.9,413.0 590.2,413.0 592.6,413.5 595.0,413.2 597.4,413.3 599.7,413.1 602.1,413.4 604.5,413.4 606.9,413.3 609.2,413.0 611.6,413.6 614.0,413.5 616.4,413.2 618.7,413.1 621.1,413.3 623.5,413.4 625.8,413.1 628.2,413.2 630.6,413.6 633.0,413.1 635.3,413.5 637.7,413.5 640.1,413.2 642.5,413.4 644.8,413.2 647.2,413.6 649.6,413.2 652.0,413.6 654.3,413.6 656.7,413.4 659.1,413.5 661.4,413.4 663.8,413.2 666.2,413.3 668.6,413.7 670.9,413.6 673.3,413.4 675.7,413.5 678.1,413.3 680.4,413.5 682.8,413.7 685.2,413.6 687.6,413.3 689.9,413.6 692.3,413.3 694.7,413.2 697.0,413.4 699.4,413.4 701.8,413.4 704.2,413.6 706.5,413.3 708.9,413.5 711.3,413.3 713.7,413.6 716.0,413.3 718.4,413.3 720.8,413.4 723.2,413.6 725.5,413.7 727.9,413.3 730.3,413.6 732.7,413.4 735.0,413.7 737.4,413.8 739.8,413.7 742.1,413.3 744.5,413.7 746.9,413.3 749.3,413.6 751.6,413.5 754.0,413.6 756.4,413.4 758.8,413.8 761.1,413.6 763.5,413.2 765.9,413.7 768.3,413.4 770.6,413.6 773.0,413.6 775.4,413.8 777.7,413.8 780.1,413.2 782.5,413.3 784.9,413.3 787.2,413.3 789.6,413.2 792.0,413.7 794.4,413.5 796.7,413.5 799.1,413.5 801.5,413.2 803.9,413.4 806.2,413.2 808.6,413.8 811.0,413.4 813.3,413.4 815.7,413.4 818.1,413.4 820.5,413.3 822.8,413.6 825.2,413.3 827.6,413.6 830.0,413.5 832.3,413.3 834.7,413.4 837.1,413.6 839.5,413.7 841.8,413.6 844.2,413.4 846.6,413.2 848.9,413.3 851.3,413.6 853.7,413.6 856.1,413.3 858.4,413.7 860.8,413.6 863.2,413.8 865.6,413.7 867.9,413.5 870.3,413.4 872.7,413.4 875.1,413.6 877.4,413.2 879.8,413.4 882.2,413.7 884.5,413.8 886.9,413.2 889.3,413.2 891.7,413.3 894.0,413.5 896.4,413.6 898.8,413.8 901.2,413.7 903.5,413.7 905.9,413.3 908.3,413.3 910.7,413.3 913.0,413.7 915.4,413.7 917.8,413.6 920.1,413.2 922.5,413.7 924.9,413.3 927.3,413.4 929.6,413.5 932.0,413.2 934.4,413.7 936.8,413.5 939.1,413.7 941.5,413.8 943.9,413.8 946.3,413.6 948.6,413.8 951.0,413.8 953.4,413.2 955.8,413.7 958.1,413.3 960.5,413.4 962.9,413.4 965.2,413.4 967.6,413.2 970.0,413.3 972.4,413.4 974.7,413.5 977.1,413.4 979.5,413.4 981.9,413.5 984.2,413.5 986.6,413.7 989.0,413.3 991.4,413.5 993.7,413.8 996.1,413.7 998.5,413.3 1000.8,413.7 1003.2,413.6 1005.6,413.4 1008.0,413.3 1010.3,413.6 1012.7,413.6 1015.1,413.6 1017.5,413.8 1019.8,413.3 1022.2,413.8 1024.6,413.2 1027.0,413.7 1029.3,413.7 1031.7,413.3 1034.1,413.3 1036.4,413.7 1038.8,413.5 1041.2,413.5 1043.6,413.4 1045.9,413.7 1048.3,413.3 1050.7,413.2 1053.1,413.4 1055.4,413.3 1057.8,413.2 1060.2,413.6 1062.6,413.3 1064.9,413.3 1067.3,413.5 1069.7,413.8 1072.0,413.4 1074.4,413.3 1076.8,413.6 1079.2,413.4 1081.5,413.3 1083.9,413.5 1086.3,413.8 1088.7,413.4 1091.0,413.7 1093.4,413.3 1095.8,413.4 1098.2,413.6 1100.5,413.3 1102.9,413.4 1105.3,413.6 1107.6,413.3 1110.0,413.3 1112.4,413.3 1114.8,413.3 1117.1,413.4 1119.5,413.4 1121.9,413.5 1124.3,413.5 1126.6,413.2 1129.0,413.6 1131.4,413.8 1133.8,413.4 1136.1,413.5 1138.5,413.5 1140.9,413.5 1143.2,413.7 1145.6,413.7 1148.0,413.8 1150.4,413.3 1152.7,413.3 1155.1,413.4 1157.5,413.8 1159.9,413.2 1162.2,413.3 1164.6,413.5 1167.0,413.8 1169.4,413.3 1171.7,413.4 1174.1,413.4 1176.5,413.8 1178.8,413.4 1181.2,413.8 1183.6,413.5 1186.0,413.7 1188.3,413.5 1190.7,413.2 1193.1,413.3 1195.5,413.2 1197.8,413.5 1200.2,413.4 1202.6,413.3 1205.0,413.6 1207.3,413.4 1209.7,413.0 1212.1,413.1 1214.5,413.0 1216.8,413.4 1219.2,413.1 1221.6,413.0 1223.9,413.1 1226.3,413.2 1228.7,413.4 1231.1,413.4 1233.4,412.9 1235.8,412.8 1238.2,413.2 1240.6,412.9 1242.9,413.1 1245.3,412.9 1247.7,412.8 1250.1,413.1 1252.4,412.9 1254.8,413.1 1257.2,412.9 1259.5,413.2 1261.9,413.0 1264.3,413.0 1266.7,412.6 1269.0,413.1 1271.4,412.7 1273.8,413.1 1276.2,412.5 1278.5,413.0 1280.9,413.0 1283.3,412.9 1285.7,412.4 1288.0,412.6 1290.4,412.4 1292.8,412.6 1295.1,412.9 1297.5,412.7 1297.5,427.1 1295.1,426.9 1292.8,427.2 1290.4,427.4 1288.0,427.2 1285.7,427.4 1283.3,426.9 1280.9,426.8 1278.5,426.8 1276.2,427.3 1273.8,426.7 1271.4,427.1 1269.0,426.7 1266.7,427.2 1264.3,426.8 1261.9,426.8 1259.5,426.6 1257.2,426.9 1254.8,426.7 1252.4,426.9 1250.1,426.7 1247.7,427.0 1245.3,426.9 1242.9,426.7 1240.6,426.9 1238.2,426.6 1235.8,427.0 1233.4,426.9 1231.1,426.4 1228.7,426.4 1226.3,426.6 1223.9,426.7 1221.6,426.8 1219.2,426.7 1216.8,426.4 1214.5,426.8 1212.1,426.7 1209.7,426.8 1207.3,426.4 1205.0,426.2 1202.6,426.5 1200.2,426.4 1197.8,426.3 1195.5,426.6 1193.1,426.5 1190.7,426.6 1188.3,426.3 1186.0,426.1 1183.6,426.3 1181.2,426.0 1178.8,426.4 1176.5,426.0 1174.1,426.4 1171.7,426.4 1169.4,426.5 1167.0,426.0 1164.6,426.3 1162.2,426.5 1159.9,426.6 1157.5,426.0 1155.1,426.4 1152.7,426.5 1150.4,426.5 1148.0,426.0 1145.6,426.1 1143.2,426.1 1140.9,426.3 1138.5,426.3 1136.1,426.3 1133.8,426.4 1131.4,426.0 1129.0,426.2 1126.6,426.6 1124.3,426.3 1121.9,426.3 1119.5,426.4 1117.1,426.4 1114.8,426.5 1112.4,426.5 1110.0,426.5 1107.6,426.5 1105.3,426.2 1102.9,426.4 1100.5,426.5 1098.2,426.2 1095.8,426.4 1093.4,426.5 1091.0,426.1 1088.7,426.4 1086.3,426.0 1083.9,426.3 1081.5,426.5 1079.2,426.4 1076.8,426.2 1074.4,426.5 1072.0,426.4 1069.7,426.0 1067.3,426.3 1064.9,426.5 1062.6,426.5 1060.2,426.2 1057.8,426.6 1055.4,426.5 1053.1,426.4 1050.7,426.6 1048.3,426.5 1045.9,426.1 1043.6,426.4 1041.2,426.3 1038.8,426.3 1036.4,426.1 1034.1,426.5 1031.7,426.5 1029.3,426.1 1027.0,426.1 1024.6,426.6 1022.2,426.0 1019.8,426.5 1017.5,426.0 1015.1,426.2 1012.7,426.2 1010.3,426.2 1008.0,426.5 1005.6,426.4 1003.2,426.2 1000.8,426.1 998.5,426.5 996.1,426.1 993.7,426.0 991.4,426.3 989.0,426.5 986.6,426.1 984.2,426.3 981.9,426.3 979.5,426.4 977.1,426.4 974.7,426.3 972.4,426.4 970.0,426.5 967.6,426.6 965.2,426.4 962.9,426.4 960.5,426.4 958.1,426.5 955.8,426.1 953.4,426.6 951.0,426.0 948.6,426.0 946.3,426.2 943.9,426.0 941.5,426.0 939.1,426.1 936.8,426.3 934.4,426.1 932.0,426.6 929.6,426.3 927.3,426.4 924.9,426.5 922.5,426.1 920.1,426.6 917.8,426.2 915.4,426.1 913.0,426.1 910.7,426.5 908.3,426.5 905.9,426.5 903.5,426.1 901.2,426.1 898.8,426.0 896.4,426.2 894.0,426.3 891.7,426.5 889.3,426.6 886.9,426.6 884.5,426.0 882.2,426.1 879.8,426.4 877.4,426.6 875.1,426.2 872.7,426.4 870.3,426.4 867.9,426.3 865.6,426.1 863.2,426.0 860.8,426.2 858.4,426.1 856.1,426.5 853.7,426.2 851.3,426.2 848.9,426.5 846.6,426.6 844.2,426.4 841.8,426.2 839.5,426.1 837.1,426.2 834.7,426.4 832.3,426.5 830.0,426.3 827.6,426.2 825.2,426.5 822.8,426.2 820.5,426.5 818.1,426.4 815.7,426.4 813.3,426.4 811.0,426.4 808.6,426.0 806.2,426.6 803.9,426.4 801.5,426.6 799.1,426.3 796.7,426.3 794.4,426.3 792.0,426.1 789.6,426.6 787.2,426.5 784.9,426.5 782.5,426.5 780.1,426.6 777.7,426.0 775.4,426.0 773.0,426.2 770.6,426.2 768.3,426.4 765.9,426.1 763.5,426.6 761.1,426.2 758.8,426.0 756.4,426.4 754.0,426.2 751.6,426.3 749.3,426.2 746.9,426.5 744.5,426.1 742.1,426.5 739.8,426.1 737.4,426.0 735.0,426.1 732.7,426.4 730.3,426.2 727.9,426.5 725.5,426.1 723.2,426.2 720.8,426.4 718.4,426.5 716.0,426.5 713.7,426.2 711.3,426.5 708.9,426.3 706.5,426.5 704.2,426.2 701.8,426.4 699.4,426.4 697.0,426.4 694.7,426.6 692.3,426.5 689.9,426.2 687.6,426.5 685.2,426.2 682.8,426.1 680.4,426.3 678.1,426.5 675.7,426.3 673.3,426.4 670.9,426.2 668.6,426.1 666.2,426.5 663.8,426.6 661.4,426.4 659.1,426.3 656.7,426.4 654.3,426.2 652.0,426.2 649.6,426.6 647.2,426.2 644.8,426.6 642.5,426.4 640.1,426.6 637.7,426.3 635.3,426.3 633.0,426.7 630.6,426.2 628.2,426.6 625.8,426.7 623.5,426.4 621.1,426.5 618.7,426.7 616.4,426.6 614.0,426.3 611.6,426.2 609.2,426.8 606.9,426.5 604.5,426.4 602.1,426.4 599.7,426.7 597.4,426.5 595.0,426.6 592.6,426.3 590.2,426.8 587.9,426.8 585.5,426.3 583.1,426.6 580.8,426.7 578.4,426.5 576.0,426.4 573.6,426.7 571.3,426.8 568.9,426.6 566.5,426.7 564.1,426.3 561.8,426.3 559.4,426.6 557.0,426.6 554.6,426.8 552.3,426.9 549.9,426.5 547.5,426.8 545.2,426.5 542.8,426.9 540.4,426.7 538.0,426.9 535.7,426.9 533.3,426.9 530.9,426.5 528.5,426.9 526.2,426.4 523.8,427.0 521.4,426.5 519.0,426.7 516.7,427.2 514.3,427.1 511.9,427.0 509.6,427.1 507.2,426.9 504.8,426.8 502.4,427.3 500.1,427.5 497.7,427.0 495.3,427.5 492.9,427.0 490.6,427.5 488.2,427.7 485.8,427.7 483.4,427.2 481.1,427.8 478.7,427.8 476.3,427.5 474.0,427.8 471.6,427.8 469.2,427.8 466.8,428.0 464.5,427.9 462.1,428.0 459.7,428.0 457.3,427.8 455.0,428.2 452.6,428.2 450.2,428.2 447.8,427.8 445.5,427.8 443.1,428.1 440.7,428.3 438.3,428.3 436.0,428.3 433.6,428.5 431.2,428.2 428.9,428.6 426.5,428.3 424.1,428.6 421.7,428.1 419.4,428.2 417.0,428.7 414.6,428.3 412.2,428.3 409.9,428.4 407.5,428.4 405.1,428.3 402.7,428.7 400.4,429.0 398.0,429.1 395.6,428.7 393.3,428.9 390.9,428.7 388.5,429.0 386.1,429.0 383.8,429.2 381.4,429.6 379.0,429.3 376.6,429.6 374.3,429.5 371.9,429.3 369.5,429.9 367.1,429.5 364.8,429.7 362.4,429.5 360.0,429.6 357.7,430.0 355.3,429.7 352.9,429.7 350.5,429.8 348.2,429.9 345.8,430.1 343.4,430.5 341.0,430.0 338.7,430.1 336.3,430.2 333.9,430.5 331.5,430.2 329.2,430.1 326.8,430.1 324.4,430.4 322.1,430.8 319.7,430.5 317.3,430.4 314.9,430.6 312.6,430.5 310.2,430.6 307.8,430.9 305.4,430.8 303.1,431.1 300.7,430.8 298.3,431.0 295.9,431.2 293.6,430.8 291.2,430.7 288.8,431.3 286.5,431.2 284.1,431.4 281.7,431.5 279.3,431.4 277.0,431.0 274.6,431.4 272.2,431.2 269.8,431.4 267.5,431.4 265.1,431.7 262.7,431.8 260.3,431.6 258.0,431.5 255.6,431.6 253.2,432.2 250.9,432.0 248.5,431.9 246.1,432.2 243.7,432.1 241.4,432.1 239.0,432.3 236.6,432.1 234.2,432.3 231.9,432.2 229.5,432.8 227.1,432.5 224.7,432.7 222.4,432.8 220.0,432.7 217.6,433.0 215.2,432.7 212.9,432.8 210.5,433.3 208.1,433.1 205.8,433.1 203.4,433.3 201.0,433.5 198.6,433.5 196.3,433.6 193.9,433.9 191.5,434.0 189.1,433.9 186.8,434.2 184.4,433.9 182.0,434.1 179.6,434.4 177.3,434.5 174.9,434.1 172.5,434.4 170.2,434.3 167.8,434.7 165.4,434.9 163.0,435.0 160.7,434.9 158.3,435.5 155.9,435.6 153.5,435.7 151.2,435.8 148.8,435.7 146.4,435.9 144.0,436.6 141.7,436.9 139.3,437.2 136.9,437.6 134.6,437.5 132.2,437.7 129.8,438.1 127.4,438.5 125.1,438.9 122.7,439.1 120.3,439.8 117.9,440.1 115.6,440.6 113.2,440.6 110.8,440.7 108.4,441.1 106.1,441.6 103.7,441.8 101.3,442.2" fill="#808080" fill-opacity="0.5"/>
<rect x="133.5" y="348.7" width="12.10" height="83.40" fill="#808080" fill-opacity="0.75"/>
<rect x="133.5" y="348.7" width="12.10" height="83.40" fill="url(#hat)" stroke="#000" stroke-opacity="0.6" stroke-width="0.8"/>
<rect x="1273.1" y="348.7" width="6.70" height="83.40" fill="#808080" fill-opacity="0.75"/>
<rect x="1273.1" y="348.7" width="6.70" height="83.40" fill="url(#hat2)" stroke="#000" stroke-opacity="0.6" stroke-width="0.8"/>
<line x1="101.6" y1="419.90" x2="1299.5" y2="419.90" stroke="#000" stroke-opacity="0.4" stroke-width="1.7"/>
<line x1="535.03" y1="348.7" x2="535.03" y2="432.1" stroke="#000" stroke-width="1" stroke-dasharray="1.6 1.6"/>
<line x1="711.4" y1="348.7" x2="711.4" y2="432.1" stroke="#000" stroke-opacity="0.7" stroke-width="1" stroke-dasharray="3.7 1.6"/>
<polyline points="101.7,411.4 104.0,398.6 107.4,430.3 111.1,394.3 113.6,419.3 116.0,395.7 117.9,401.4 119.3,400.7 120.7,412.1 122.1,390.7 124.3,402.9 125.7,408.6 126.7,406.4 128.6,420.0 130.7,412.9 132.6,400.0 134.0,388.6 135.7,395.0 138.3,383.6 140.0,397.1 140.7,395.7 143.6,421.4 146.0,386.4 147.9,394.3 149.3,402.9 150.3,401.4 153.1,419.3 156.1,388.6 157.9,404.3 159.3,411.4 162.1,430.3 165.0,410.0 166.4,406.4 167.9,412.9 169.6,393.6 171.4,401.4 172.9,410.0 174.3,405.7 175.7,413.6 177.9,410.7 179.6,396.4 181.4,420.0 183.6,402.9 185.3,395.0 186.1,397.1 187.1,389.3 189.3,407.1 190.3,400.0 191.9,428.6 194.0,372.6 195.0,394.3 196.4,395.0 198.6,408.6 200.0,418.6 201.1,413.6 201.7,419.3 205.0,389.7 206.4,400.0 208.6,415.0 210.0,388.9 212.1,397.1 213.6,392.1 214.3,405.7 215.4,388.6 217.9,401.4 219.3,397.9 220.7,397.1 223.6,420.0 225.7,405.7 228.6,404.3 230.7,391.7 232.9,402.9 234.3,397.1 235.7,407.1 237.9,396.0 240.7,406.4 242.9,405.7 244.3,410.0 246.4,402.1 249.3,408.6 250.7,400.7 251.7,404.3 253.1,400.0 255.7,412.9 257.1,417.1 259.3,410.0 260.7,407.1 262.1,409.3 265.4,397.9 267.9,406.4 269.3,405.0 271.4,415.0 274.6,394.6 277.1,412.1 280.3,396.4 282.9,405.7 285.7,406.4 288.6,397.1 290.0,406.4 292.9,396.4 295.0,398.6 296.4,402.9 297.9,401.4 300.0,417.1 302.1,404.0 303.9,411.4 306.4,408.9 309.3,407.9 311.4,408.3 313.1,411.9 315.0,402.9 316.4,406.4 317.9,404.3 319.7,400.7 321.4,405.7 323.6,408.6 325.7,417.9 327.9,408.6 330.7,403.6 332.9,397.9 335.0,411.4 337.1,405.0 339.3,404.3 341.4,398.6 343.6,405.7 345.0,409.3 348.3,397.6 350.7,412.9 353.1,400.0 355.0,407.1 356.4,403.6 358.6,399.3 360.7,402.9 361.4,401.4 362.9,410.0 365.0,411.9 367.1,413.6 368.6,412.9 370.3,409.3 372.1,417.9 374.3,406.0 376.4,415.0 378.3,400.7 380.7,398.6 382.9,400.0 384.3,403.6 385.3,400.0 387.9,417.6 390.0,408.6 392.1,415.0 395.0,404.3 398.6,394.6 400.0,396.4 400.7,392.6 402.9,397.1 405.0,399.3 407.1,400.0 410.0,382.4 412.1,394.3 413.6,401.4 415.4,388.6 417.9,389.3 420.0,381.4 422.1,382.1 424.3,390.0 427.1,399.3 428.6,399.3 430.7,382.4 432.1,385.7 433.1,393.6 434.0,388.6 435.0,402.9 436.4,387.9 438.6,389.3 440.7,390.0 442.1,381.4 443.6,397.9 445.7,389.3 448.1,407.1 450.0,390.0 452.1,389.7 453.6,388.6 455.7,384.3 457.9,389.3 461.4,380.0 463.6,385.0 465.0,382.9 466.4,387.9 468.3,397.1 469.3,395.0 470.7,400.7 473.6,382.9 475.7,390.7 478.6,383.6 480.7,385.7 482.1,386.4 483.9,378.6 485.7,385.7 486.4,382.9 487.9,390.0 489.3,385.7 491.0,377.9 492.1,387.1 493.1,388.6 494.6,395.7 496.4,390.0 497.9,385.7 500.0,381.4 501.4,387.9 503.6,382.6 505.7,388.6 507.9,395.4 510.3,388.9 512.1,391.4 514.3,393.6 516.9,381.7 518.6,387.9 520.0,389.3 522.1,381.4 523.6,383.6 525.0,389.3 526.4,382.1 529.0,392.1 531.4,382.9 533.6,376.0 535.7,377.9 537.4,377.9 539.3,384.3 541.4,397.1 542.9,407.1 544.0,410.7 545.4,404.3 546.9,398.6 549.3,395.0 552.1,389.3 554.7,384.7 557.1,390.7 559.3,395.0 560.7,398.3 562.9,391.4 564.3,390.7 565.7,385.7 567.9,394.3 570.0,397.6 572.9,395.4 574.6,385.7 576.4,379.6 578.3,388.6 580.0,391.4 582.1,398.6 583.6,392.1 586.1,402.1 588.1,398.6 591.9,406.0 595.0,394.3 597.9,384.6 600.0,386.4 601.0,385.0 602.4,392.1 604.3,381.4 605.7,377.4 607.9,382.9 609.3,382.1 610.0,384.0 612.1,380.7 614.3,381.4 615.4,382.1 616.9,377.4 619.0,384.3 621.4,380.0 623.6,376.4 625.0,374.3 627.1,379.3 629.3,381.7 631.4,382.1 634.0,382.1 635.4,390.0 636.9,395.4 638.3,393.6 640.7,385.0 642.6,390.0 644.3,378.6 646.0,372.1 647.9,381.4 650.0,393.6 652.1,382.9 653.6,377.9 656.4,377.4 657.9,375.7 659.3,370.0 661.1,382.1 663.1,374.3 665.7,378.6 667.9,380.0 670.0,372.6 672.9,373.6 675.7,367.9 677.9,377.1 680.0,389.3 681.4,391.1 683.1,387.9 685.0,378.6 685.7,380.7 687.9,375.7 690.0,372.9 692.1,365.7 693.6,372.1 695.0,376.9 696.4,368.6 697.9,362.9 699.3,365.0 700.0,372.9 701.7,368.6 703.1,378.6 705.0,363.6 706.4,361.4 708.6,362.1 710.7,355.7 712.6,367.9 714.0,364.3 715.4,370.7 717.1,370.0 718.6,361.7 721.4,378.6 723.6,384.6 725.0,384.3 727.1,366.4 729.0,372.1 730.7,365.0 734.0,382.6 735.7,372.1 737.4,367.4 740.0,367.1 742.4,360.7 744.0,365.7 745.7,365.4 747.1,369.3 748.9,362.9 750.7,352.9 752.9,365.7 755.7,376.0 757.9,366.4 759.3,361.4 760.3,362.1 762.1,372.9 764.3,370.7 766.1,373.6 767.9,366.4 770.7,363.6 772.9,362.1 775.0,363.6 776.4,365.0 778.3,360.0 780.0,359.3 781.7,356.1 783.6,360.7 785.0,364.3 786.4,374.3 787.9,369.3 789.7,366.4 791.0,372.9 793.6,367.9 795.4,368.6 797.9,361.4 799.0,358.6 800.4,360.7 801.7,365.7 802.9,366.4 804.3,372.9 805.3,374.3 806.4,385.0 807.9,365.0 809.3,377.1 811.0,366.4 812.6,357.9 813.9,376.4 815.7,373.6 818.6,367.1 820.7,366.4 822.1,362.4 824.0,370.0 826.7,381.1 828.6,375.0 830.0,374.3 832.1,367.1 835.0,363.1 836.4,365.7 838.1,362.4 840.7,371.4 842.9,370.7 844.3,372.1 846.4,366.4 847.9,372.1 849.7,363.6 851.4,369.3 853.1,365.7 855.0,365.4 857.1,370.7 858.6,370.0 860.3,374.3 861.4,380.7 862.9,378.6 865.0,362.1 866.4,375.0 868.6,381.4 870.0,380.7 873.6,387.9 875.7,377.9 877.9,370.0 880.0,375.0 882.1,374.3 885.0,378.6 887.1,370.7 889.3,368.6 891.4,368.6 893.6,370.7 895.7,372.1 897.9,376.4 900.0,374.3 901.1,378.6 902.9,373.6 905.0,361.4 906.9,377.9 908.1,374.3 909.3,378.3 910.3,375.0 911.1,378.6 912.4,366.7 913.9,372.1 915.7,372.9 917.4,373.6 919.3,370.0 920.4,377.9 921.9,360.3 922.9,374.3 924.0,372.9 925.7,377.1 927.4,378.6 929.3,372.6 932.1,372.1 935.0,377.9 938.3,385.0 940.0,370.7 941.7,362.9 943.3,369.3 944.7,374.3 946.4,367.1 948.3,364.3 950.0,361.4 952.1,372.1 955.0,385.0 956.1,381.4 957.4,386.4 960.0,365.0 961.4,370.7 962.4,367.1 964.3,371.4 966.0,382.9 967.1,376.4 968.3,381.4 970.7,369.3 971.4,370.0 972.9,362.9 975.0,373.6 976.1,374.3 978.6,385.4 980.7,374.3 981.9,372.9 984.3,377.9 986.4,373.6 988.1,367.9 990.0,377.9 991.7,381.4 993.6,372.1 995.0,382.9 996.1,372.1 997.9,381.4 1000.0,383.6 1002.1,384.3 1004.0,382.1 1005.3,382.9 1007.9,388.9 1009.3,384.3 1012.1,378.6 1013.6,382.1 1015.4,375.0 1017.4,384.3 1019.3,380.7 1021.4,372.6 1023.6,379.3 1026.0,392.1 1027.6,378.6 1029.6,374.3 1031.4,382.9 1034.0,392.6 1035.7,382.9 1037.9,377.9 1040.0,382.9 1042.1,385.7 1043.9,391.1 1046.0,380.0 1047.9,385.0 1050.7,390.3 1052.6,380.7 1054.3,382.9 1055.7,379.3 1057.6,385.4 1059.0,378.3 1060.7,384.3 1063.6,395.0 1065.0,390.7 1066.1,395.7 1068.6,383.6 1070.0,386.4 1072.1,380.0 1073.9,379.3 1076.7,388.6 1079.3,381.4 1081.1,380.3 1083.6,384.3 1086.4,392.6 1088.6,385.7 1090.3,391.4 1092.1,386.4 1093.6,390.7 1095.3,385.0 1097.1,389.3 1098.6,387.9 1100.0,387.9 1101.4,395.0 1103.6,398.9 1105.7,398.6 1107.1,392.1 1108.9,391.4 1111.4,402.9 1113.6,392.9 1116.4,374.0 1118.6,386.4 1121.1,380.7 1122.9,385.7 1125.7,401.1 1128.3,384.3 1130.4,372.1 1131.7,377.9 1133.9,365.7 1135.7,375.0 1137.9,380.0 1139.7,373.6 1141.1,380.0 1142.9,374.3 1144.6,375.7 1146.4,373.6 1147.9,375.0 1149.7,370.0 1151.7,368.6 1153.1,377.9 1155.4,369.6 1157.1,375.7 1158.6,381.4 1160.7,387.1 1161.4,385.7 1162.9,395.0 1165.0,377.1 1166.1,370.7 1167.9,370.7 1169.3,377.9 1170.7,378.6 1172.9,370.0 1174.3,368.6 1175.7,360.7 1177.1,362.9 1179.3,377.4 1181.4,370.0 1182.9,367.9 1184.3,369.3 1187.4,364.0 1189.3,370.7 1190.7,376.4 1192.1,374.3 1194.3,380.7 1196.0,378.6 1198.1,372.9 1200.0,376.4 1202.6,370.0 1205.0,375.7 1206.4,370.7 1208.1,377.9 1209.3,375.0 1211.4,381.9 1213.9,362.9 1215.4,367.9 1216.9,372.1 1218.3,363.6 1220.0,370.7 1221.4,375.0 1223.1,370.7 1225.0,376.4 1226.4,370.0 1227.9,375.7 1230.0,382.1 1231.4,365.7 1233.1,375.7 1235.0,380.7 1237.1,374.3 1239.3,372.6 1240.7,374.3 1243.3,382.1 1245.7,371.4 1247.4,367.9 1249.6,363.6 1251.4,377.9 1253.6,368.6 1255.0,373.6 1257.1,375.7 1258.9,379.3 1260.7,372.9 1262.1,375.7 1264.6,364.3 1266.4,374.3 1267.9,377.9 1269.6,367.9 1271.4,375.0 1274.0,382.1 1276.0,374.3 1277.1,380.0 1278.9,370.7 1280.7,368.3 1282.6,382.9 1284.3,373.6 1286.4,374.3 1288.6,380.7 1290.7,378.6 1292.1,375.0 1294.6,369.3 1296.0,370.0 1297.9,373.6" fill="none" stroke="#0000ff" stroke-width="1.35" stroke-linejoin="round"/>
</g>
<rect x="101.6" y="348.7" width="1197.90" height="83.40" fill="none" stroke="#000" stroke-width="0.8"/>
<text class="s" x="112.60" y="447.10" font-size="9.4" text-anchor="middle">3500</text>
<text class="s" x="171.94" y="447.10" font-size="9.4" text-anchor="middle">3600</text>
<text class="s" x="231.27" y="447.10" font-size="9.4" text-anchor="middle">3700</text>
<text class="s" x="290.61" y="447.10" font-size="9.4" text-anchor="middle">3800</text>
<text class="s" x="349.94" y="447.10" font-size="9.4" text-anchor="middle">3900</text>
<text class="s" x="409.27" y="447.10" font-size="9.4" text-anchor="middle">4000</text>
<text class="s" x="468.61" y="447.10" font-size="9.4" text-anchor="middle">4100</text>
<text class="s" x="527.95" y="447.10" font-size="9.4" text-anchor="middle">4200</text>
<text class="s" x="587.28" y="447.10" font-size="9.4" text-anchor="middle">4300</text>
<text class="s" x="646.62" y="447.10" font-size="9.4" text-anchor="middle">4400</text>
<text class="s" x="705.95" y="447.10" font-size="9.4" text-anchor="middle">4500</text>
<text class="s" x="765.29" y="447.10" font-size="9.4" text-anchor="middle">4600</text>
<text class="s" x="824.62" y="447.10" font-size="9.4" text-anchor="middle">4700</text>
<text class="s" x="883.96" y="447.10" font-size="9.4" text-anchor="middle">4800</text>
<text class="s" x="943.29" y="447.10" font-size="9.4" text-anchor="middle">4900</text>
<text class="s" x="1002.63" y="447.10" font-size="9.4" text-anchor="middle">5000</text>
<text class="s" x="1061.96" y="447.10" font-size="9.4" text-anchor="middle">5100</text>
<text class="s" x="1121.30" y="447.10" font-size="9.4" text-anchor="middle">5200</text>
<text class="s" x="1180.63" y="447.10" font-size="9.4" text-anchor="middle">5300</text>
<text class="s" x="1239.96" y="447.10" font-size="9.4" text-anchor="middle">5400</text>
<text class="s" x="1299.30" y="447.10" font-size="9.4" text-anchor="middle">5500</text>
<text class="s" x="95.00" y="423.40" font-size="9.4" text-anchor="end">0</text>
<text class="s" x="95.00" y="397.25" font-size="9.4" text-anchor="end">5</text>
<text class="s" x="95.00" y="371.10" font-size="9.4" text-anchor="end">10</text>
<path d="M112.60 432.1v3.5M171.94 432.1v3.5M231.27 432.1v3.5M290.61 432.1v3.5M349.94 432.1v3.5M409.27 432.1v3.5M468.61 432.1v3.5M527.95 432.1v3.5M587.28 432.1v3.5M646.62 432.1v3.5M705.95 432.1v3.5M765.29 432.1v3.5M824.62 432.1v3.5M883.96 432.1v3.5M943.29 432.1v3.5M1002.63 432.1v3.5M1061.96 432.1v3.5M1121.30 432.1v3.5M1180.63 432.1v3.5M1239.96 432.1v3.5M1299.30 432.1v3.5M101.6 419.90h-3.5M101.6 393.75h-3.5M101.6 367.60h-3.5" stroke="#000" stroke-width="0.8"/>
<text class="s" x="112.70" y="346.50" font-size="10.1">e<tspan font-size="7.07" dy="-3.74">−17</tspan><tspan dy="3.74">x2</tspan><tspan font-style="italic">Å</tspan></text>
<text class="s" transform="translate(108.25,349.7) rotate(90)" text-anchor="end" xml:space="preserve" font-size="10.3" fill="#ff00ff">CII  {</text>
<text class="s" transform="translate(160.05,349.7) rotate(90)" text-anchor="end" xml:space="preserve" font-size="10.3" fill="#ff0000">OVI  {</text>
<text class="s" transform="translate(180.85,349.7) rotate(90)" text-anchor="end" xml:space="preserve" font-size="10.3" fill="#9b30b5">HeII {</text>
<text class="s" transform="translate(161.95,307.2) rotate(90)" text-anchor="end" xml:space="preserve" font-size="10.3" fill="#ffa500">SiIV {</text>
<text class="s" transform="translate(287.25,349.7) rotate(90)" text-anchor="end" xml:space="preserve" font-size="10.3" fill="#8a2be2">SiIV {</text>
<text class="s" transform="translate(380.65,349.7) rotate(90)" text-anchor="end" xml:space="preserve" font-size="10.3" fill="#87ceeb" fill-opacity="0.75">OII  {</text>
<text class="s" transform="translate(393.05,349.7) rotate(90)" text-anchor="end" xml:space="preserve" font-size="10.3" fill="#ffa500">CIV  {</text>
<text class="s" transform="translate(401.95,349.7) rotate(90)" text-anchor="end" xml:space="preserve" font-size="10.3" fill="#87ceeb" fill-opacity="0.75">OII  {</text>
<text class="s" transform="translate(583.75,349.7) rotate(90)" text-anchor="end" xml:space="preserve" font-size="10.3" fill="#ff0000">NV   {</text>
<text class="s" transform="translate(630.55,349.7) rotate(90)" text-anchor="end" xml:space="preserve" font-size="10.3" fill="#ff0000">SiII {</text>
<text class="s" transform="translate(679.35,349.7) rotate(90)" text-anchor="end" xml:space="preserve" font-size="10.3" fill="#8a2be2" fill-opacity="0.85">HeII {</text>
<text class="s" transform="translate(766.45,349.7) rotate(90)" text-anchor="end" xml:space="preserve" font-size="10.3" fill="#87ceeb" fill-opacity="0.6">H<tspan font-style="italic">γ</tspan> {</text>
<text class="s" transform="translate(790.85,349.7) rotate(90)" text-anchor="end" xml:space="preserve" font-size="10.3" fill="#87ceeb" fill-opacity="0.6">H<tspan font-style="italic">γ</tspan> {</text>
<text class="s" transform="translate(906.95,349.7) rotate(90)" text-anchor="end" xml:space="preserve" font-size="10.3" fill="#ff0000">SiIV {</text>
<text class="s" transform="translate(943.35,349.7) rotate(90)" text-anchor="end" xml:space="preserve" font-size="10.3" fill="#008000">H<tspan font-style="italic">γ</tspan> {</text>
<text class="s" transform="translate(941.15,307.2) rotate(90)" text-anchor="end" xml:space="preserve" font-size="10.3" fill="#ffa500" fill-opacity="0.85">CIII {</text>
<text class="s" transform="translate(1076.95,349.7) rotate(90)" text-anchor="end" xml:space="preserve" font-size="10.3" fill="#a0209a">CII  {</text>
<text class="s" transform="translate(1095.55,349.7) rotate(90)" text-anchor="end" xml:space="preserve" font-size="10.3" fill="#87ceeb" fill-opacity="0.6">H<tspan font-style="italic">β</tspan> {</text>
<text class="s" transform="translate(1112.25,349.7) rotate(90)" text-anchor="end" xml:space="preserve" font-size="10.3" fill="#8a2be2">CIII {</text>
<text class="s" transform="translate(1122.75,349.7) rotate(90)" text-anchor="end" xml:space="preserve" font-size="10.3" fill="#87ceeb" fill-opacity="0.6">H<tspan font-style="italic">β</tspan> {</text>
<text class="s" transform="translate(1156.65,349.7) rotate(90)" text-anchor="end" xml:space="preserve" font-size="10.3" fill="#87ceeb" fill-opacity="0.6">OIII {</text>
<text class="s" transform="translate(1184.25,349.7) rotate(90)" text-anchor="end" xml:space="preserve" font-size="10.3" fill="#87ceeb" fill-opacity="0.75">OIII {</text>
<text class="s" transform="translate(1187.05,307.2) rotate(90)" text-anchor="end" xml:space="preserve" font-size="10.3" fill="#87ceeb" fill-opacity="0.75">OIII {</text>
<text class="s" transform="translate(1215.05,307.2) rotate(90)" text-anchor="end" xml:space="preserve" font-size="10.3" fill="#87ceeb" fill-opacity="0.75">OIII {</text>
<text class="s" transform="translate(1219.25,349.7) rotate(90)" text-anchor="end" xml:space="preserve" font-size="10.3" fill="#ff0000">CIV  {</text>
<text class="s" transform="translate(1292.75,349.7) rotate(90)" text-anchor="end" xml:space="preserve" font-size="10.3" fill="#008000">H<tspan font-style="italic">β</tspan> {</text>
<rect x="479.8" y="450.3" width="16.6" height="5.8" fill="#ff0000"/>
<text class="s" x="503.10" y="456.3" font-size="8.3">Ly<tspan font-style="italic">α</tspan></text>
<rect x="533.0" y="450.3" width="16.6" height="5.8" fill="#008000"/>
<text class="s" x="556.30" y="456.30" font-size="8.3">OII</text>
<rect x="586.5" y="450.3" width="16.6" height="5.8" fill="#8a2be2"/>
<text class="s" x="609.80" y="456.30" font-size="8.3">CIV</text>
<rect x="640.8" y="450.3" width="16.6" height="5.8" fill="#800080"/>
<text class="s" x="664.10" y="456.30" font-size="8.3">CIII</text>
<rect x="692.5" y="450.3" width="16.6" height="5.8" fill="#ff00ff"/>
<text class="s" x="715.80" y="456.30" font-size="8.3">MgII</text>
<rect x="748.0" y="450.3" width="16.6" height="5.8" fill="#ffa500"/>
<text class="s" x="771.30" y="456.30" font-size="8.3">HeII</text>
<rect x="803.5" y="450.3" width="16.6" height="5.8" fill="#87ceeb"/>
<text class="s" x="826.80" y="456.30" font-size="8.3">(K)CaII</text>
<rect x="868.8" y="450.3" width="16.6" height="5.8" fill="#87ceeb"/>
<text class="s" x="892.10" y="456.30" font-size="8.3">(H)CaII</text>
<clipPath id="p0"><rect x="72.30" y="534.70" width="143.70" height="143.80"/></clipPath><g clip-path="url(#p0)">
<rect x="70.0" y="532.8" width="148.4" height="147.50" fill="#f8f8f8"/>
<rect x="70.0" y="532.8" width="148.4" height="147.50" fill="#000" filter="url(#sky)"/>
<polygon points="126.0,588.6 171.7,588.6 178.4,600.0 178.4,622.9 166.9,637.6 157.0,645.0 147.3,644.2 134.2,634.3 122.7,621.2 121.0,600.0" fill="#000" opacity="0.26" filter="url(#gb)"/>
<polygon points="129.3,592.7 168.8,592.7 174.5,602.5 174.5,622.2 164.6,634.9 156.1,641.3 147.7,640.6 136.4,632.1 126.5,620.8 125.1,602.5" fill="#000" opacity="0.9" filter="url(#gb2)"/>
<polygon points="132.9,597.0 165.6,597.0 170.4,605.2 170.4,621.5 162.2,632.1 155.1,637.4 148.2,636.8 138.8,629.7 130.6,620.3 129.4,605.2" fill="#000" stroke="#000" stroke-width="2" stroke-linejoin="round"/>
</g>
<circle cx="116.7" cy="567.4" r="12.0" fill="none" stroke="#787878" stroke-width="1.15"/>
<circle cx="140.0" cy="567.4" r="12.0" fill="none" stroke="#787878" stroke-width="1.15"/>
<circle cx="103.3" cy="587.2" r="12.0" fill="none" stroke="#787878" stroke-width="1.15"/>
<circle cx="164.6" cy="568.3" r="12.0" fill="none" stroke="#787878" stroke-width="1.15"/>
<circle cx="164.6" cy="568.3" r="12.9" fill="none" stroke="#808080" stroke-width="2.0" stroke-dasharray="2.2 2.4" opacity="0.8"/>
<circle cx="176.9" cy="589.1" r="12.0" fill="none" stroke="#787878" stroke-width="1.15"/>
<circle cx="176.9" cy="589.1" r="12.9" fill="none" stroke="#808080" stroke-width="2.0" stroke-dasharray="2.2 2.4" opacity="0.8"/>
<circle cx="90.0" cy="608.0" r="12.0" fill="none" stroke="#787878" stroke-width="1.15"/>
<circle cx="90.0" cy="608.0" r="12.9" fill="none" stroke="#808080" stroke-width="2.0" stroke-dasharray="2.2 2.4" opacity="0.8"/>
<circle cx="102.6" cy="629.4" r="12.0" fill="none" stroke="#787878" stroke-width="1.15"/>
<circle cx="102.6" cy="629.4" r="12.9" fill="none" stroke="#808080" stroke-width="2.0" stroke-dasharray="2.2 2.4" opacity="0.8"/>
<circle cx="127.8" cy="587.8" r="12.0" fill="none" stroke="#ffa500" stroke-width="1.9"/>
<circle cx="127.8" cy="587.8" r="12.8" fill="none" stroke="#ffa500" stroke-width="2.6" stroke-dasharray="2.2 2.4"/>
<circle cx="152.4" cy="588.4" r="12.0" fill="none" stroke="#00ff00" stroke-width="1.9"/>
<circle cx="152.4" cy="588.4" r="12.8" fill="none" stroke="#00ff00" stroke-width="2.6" stroke-dasharray="2.2 2.4"/>
<circle cx="115.2" cy="608.6" r="12.0" fill="none" stroke="#ff0000" stroke-width="1.9"/>
<circle cx="115.2" cy="608.6" r="12.8" fill="none" stroke="#ff0000" stroke-width="2.6" stroke-dasharray="2.2 2.4"/>
<circle cx="139.1" cy="609.2" r="12.0" fill="none" stroke="#0000ff" stroke-width="1.9"/>
<circle cx="139.1" cy="609.2" r="12.8" fill="none" stroke="#0000ff" stroke-width="2.6" stroke-dasharray="2.2 2.4"/>
<rect x="95.75" y="558.35" width="96.90" height="96.90" fill="none" stroke="#ff0000" stroke-width="1.1"/>
<path d="M141.20 606.80h6M144.20 603.80v6" stroke="#ff0000" stroke-width="1" fill="none"/>
<text class="s" x="144.20" y="546.28" font-size="10" text-anchor="middle" fill="#ff0000">N</text>
<text class="s" x="81.22" y="610.40" font-size="10" text-anchor="middle" fill="#ff0000">E</text>
<rect x="70.00" y="532.8" width="148.4" height="147.50" fill="none" stroke="#000" stroke-width="1"/>
<text class="s" x="79.60" y="696.00" font-size="10.3" text-anchor="middle">−4</text>
<text class="s" x="61.40" y="675.30" font-size="10.3" text-anchor="end">−4</text>
<text class="s" x="111.90" y="696.00" font-size="10.3" text-anchor="middle">−2</text>
<text class="s" x="61.40" y="643.00" font-size="10.3" text-anchor="end">−2</text>
<text class="s" x="144.20" y="696.00" font-size="10.3" text-anchor="middle">0</text>
<text class="s" x="61.40" y="610.70" font-size="10.3" text-anchor="end">0</text>
<text class="s" x="176.50" y="696.00" font-size="10.3" text-anchor="middle">2</text>
<text class="s" x="61.40" y="578.40" font-size="10.3" text-anchor="end">2</text>
<text class="s" x="208.80" y="696.00" font-size="10.3" text-anchor="middle">4</text>
<text class="s" x="61.40" y="546.10" font-size="10.3" text-anchor="end">4</text>
<path d="M79.60 680.3v4.5M70.00 671.40h-4.5M111.90 680.3v4.5M70.00 639.10h-4.5M144.20 680.3v4.5M70.00 606.80h-4.5M176.50 680.3v4.5M70.00 574.50h-4.5M208.80 680.3v4.5M70.00 542.20h-4.5" stroke="#000" stroke-width="1"/>
<text class="s" x="144.20" y="525.60" font-size="12.9" text-anchor="middle">Fiber Positions</text>
<text class="s" x="144.20" y="707.10" font-size="10.7" text-anchor="middle">arcsecs</text>
<clipPath id="p1"><rect x="255.4" y="532.8" width="148.4" height="147.50"/></clipPath><g clip-path="url(#p1)">
<rect x="255.4" y="532.8" width="148.4" height="147.50" fill="#414487"/>
<clipPath id="tri"><path d="M255.4 532.8H403.8V557.5L255.4 643.2Z"/></clipPath>
<g clip-path="url(#tri)">
<rect x="255.4" y="532.8" width="148.4" height="147.50" fill="#26828e"/>
<g filter="url(#lb)">
<ellipse cx="253.7" cy="548.7" rx="11.3" ry="35.5" fill="#2c728e" opacity="1" transform="rotate(-20 253.7 548.7)"/>
<ellipse cx="276.3" cy="553.5" rx="8.9" ry="37.1" fill="#440154" opacity="1" transform="rotate(-33 276.3 553.5)"/>
<ellipse cx="271.5" cy="532.5" rx="11.3" ry="12.9" fill="#440154" opacity="1" transform="rotate(0 271.5 532.5)"/>
<ellipse cx="250.5" cy="618.1" rx="12.1" ry="24.2" fill="#440154" opacity="1" transform="rotate(0 250.5 618.1)"/>
<ellipse cx="260.2" cy="642.3" rx="17.8" ry="11.3" fill="#440154" opacity="1" transform="rotate(0 260.2 642.3)"/>
<ellipse cx="379.7" cy="547.0" rx="33.9" ry="24.2" fill="#440154" opacity="1" transform="rotate(0 379.7 547.0)"/>
<ellipse cx="371.6" cy="571.3" rx="21.0" ry="12.9" fill="#440154" opacity="1" transform="rotate(0 371.6 571.3)"/>
<ellipse cx="395.8" cy="560.0" rx="16.1" ry="12.9" fill="#440154" opacity="1" transform="rotate(0 395.8 560.0)"/>
<ellipse cx="405.5" cy="530.9" rx="9.7" ry="9.7" fill="#3b528b" opacity="0.9" transform="rotate(0 405.5 530.9)"/>
<ellipse cx="316.7" cy="551.9" rx="25.8" ry="19.4" fill="#1f9e89" opacity="1" transform="rotate(0 316.7 551.9)"/>
<ellipse cx="310.2" cy="579.3" rx="29.1" ry="16.1" fill="#21918c" opacity="1" transform="rotate(0 310.2 579.3)"/>
<ellipse cx="334.4" cy="584.2" rx="16.1" ry="12.9" fill="#4ec36b" opacity="0.95" transform="rotate(0 334.4 584.2)"/>
<ellipse cx="308.6" cy="602.8" rx="30.7" ry="11.3" fill="#5ec962" opacity="1" transform="rotate(-28 308.6 602.8)"/>
<ellipse cx="289.2" cy="604.4" rx="19.4" ry="12.9" fill="#a0da39" opacity="1" transform="rotate(-25 289.2 604.4)"/>
<ellipse cx="281.2" cy="602.8" rx="8.9" ry="8.1" fill="#fde725" opacity="1" transform="rotate(-20 281.2 602.8)"/>
</g>
<ellipse cx="282.0" cy="602.0" rx="6.5" ry="5.5" fill="#fde725" opacity="0.8" filter="url(#gb)"/>
</g></g>
<rect x="281.15" y="558.35" width="96.90" height="96.90" fill="none" stroke="#ff0000" stroke-width="1.45"/>
<path d="M329.60 570.10V599.30M329.60 614.30V643.50M292.90 606.80H322.10M337.10 606.80H366.30" stroke="#ff0000" stroke-width="1.45" fill="none"/>
<text class="s" x="329.60" y="546.28" font-size="10" text-anchor="middle" fill="#ff0000">N</text>
<text class="s" x="266.62" y="610.40" font-size="10" text-anchor="middle" fill="#ff0000">E</text>
<rect x="255.40" y="532.8" width="148.4" height="147.50" fill="none" stroke="#000" stroke-width="1"/>
<text class="s" x="265.00" y="696.00" font-size="10.3" text-anchor="middle">−4</text>
<text class="s" x="246.80" y="675.30" font-size="10.3" text-anchor="end">−4</text>
<text class="s" x="297.30" y="696.00" font-size="10.3" text-anchor="middle">−2</text>
<text class="s" x="246.80" y="643.00" font-size="10.3" text-anchor="end">−2</text>
<text class="s" x="329.60" y="696.00" font-size="10.3" text-anchor="middle">0</text>
<text class="s" x="246.80" y="610.70" font-size="10.3" text-anchor="end">0</text>
<text class="s" x="361.90" y="696.00" font-size="10.3" text-anchor="middle">2</text>
<text class="s" x="246.80" y="578.40" font-size="10.3" text-anchor="end">2</text>
<text class="s" x="394.20" y="696.00" font-size="10.3" text-anchor="middle">4</text>
<text class="s" x="246.80" y="546.10" font-size="10.3" text-anchor="end">4</text>
<path d="M265.00 680.3v4.5M255.40 671.40h-4.5M297.30 680.3v4.5M255.40 639.10h-4.5M329.60 680.3v4.5M255.40 606.80h-4.5M361.90 680.3v4.5M255.40 574.50h-4.5M394.20 680.3v4.5M255.40 542.20h-4.5" stroke="#000" stroke-width="1"/>
<text class="s" x="329.60" y="525.60" font-size="12.9" text-anchor="middle">Lineflux Map</text>
<text class="s" x="329.60" y="707.10" font-size="10.7" text-anchor="middle">s/b: 1.81 +/- 0.126</text>
<clipPath id="p2"><rect x="442.80" y="534.70" width="143.70" height="143.80"/></clipPath><g clip-path="url(#p2)">
<rect x="440.5" y="532.8" width="148.4" height="147.50" fill="#f9f9f9"/>
<rect x="440.5" y="532.8" width="148.4" height="147.50" fill="#000" filter="url(#sky)"/>
<ellipse cx="523.20" cy="616.70" rx="31.52" ry="30.40" fill="#000" opacity="0.33" filter="url(#gb)"/>
<ellipse cx="523.20" cy="616.70" rx="21.28" ry="20.52" fill="#000" filter="url(#gb2)"/>
<ellipse cx="523.20" cy="616.70" rx="17.73" ry="17.10" fill="#000"/>
</g>
<ellipse cx="523.7" cy="615.4" rx="43.2" ry="42.8" fill="none" stroke="#ffd700" stroke-width="1.3"/>
<rect x="466.25" y="558.35" width="96.90" height="96.90" fill="none" stroke="#ff0000" stroke-width="1.1"/>
<path d="M514.70 570.10V599.30M514.70 614.30V643.50M478.00 606.80H507.20M522.20 606.80H551.40" stroke="#ff0000" stroke-width="1.1" fill="none"/>
<text class="s" x="514.70" y="546.28" font-size="10" text-anchor="middle" fill="#ff0000">N</text>
<text class="s" x="451.72" y="610.40" font-size="10" text-anchor="middle" fill="#ff0000">E</text>
<rect x="440.50" y="532.8" width="148.4" height="147.50" fill="none" stroke="#000" stroke-width="1"/>
<text class="s" x="450.10" y="696.00" font-size="10.3" text-anchor="middle">−4</text>
<text class="s" x="431.90" y="675.30" font-size="10.3" text-anchor="end">−4</text>
<text class="s" x="482.40" y="696.00" font-size="10.3" text-anchor="middle">−2</text>
<text class="s" x="431.90" y="643.00" font-size="10.3" text-anchor="end">−2</text>
<text class="s" x="514.70" y="696.00" font-size="10.3" text-anchor="middle">0</text>
<text class="s" x="431.90" y="610.70" font-size="10.3" text-anchor="end">0</text>
<text class="s" x="547.00" y="696.00" font-size="10.3" text-anchor="middle">2</text>
<text class="s" x="431.90" y="578.40" font-size="10.3" text-anchor="end">2</text>
<text class="s" x="579.30" y="696.00" font-size="10.3" text-anchor="middle">4</text>
<text class="s" x="431.90" y="546.10" font-size="10.3" text-anchor="end">4</text>
<path d="M450.10 680.3v4.5M440.50 671.40h-4.5M482.40 680.3v4.5M440.50 639.10h-4.5M514.70 680.3v4.5M440.50 606.80h-4.5M547.00 680.3v4.5M440.50 574.50h-4.5M579.30 680.3v4.5M440.50 542.20h-4.5" stroke="#000" stroke-width="1"/>
<text class="s" x="514.70" y="525.60" font-size="12.9" text-anchor="middle">DECaLS(24.0) g</text>
<text class="s" x="514.70" y="707.10" font-size="10.7" text-anchor="middle">m:19.7  re:2.6"  s:0.8"</text>
<text class="s" x="514.70" y="719.10" font-size="10.7" text-anchor="middle">EWr: 1, PLAE: 0.072</text>
<clipPath id="p3"><rect x="628.20" y="534.70" width="143.70" height="143.80"/></clipPath><g clip-path="url(#p3)">
<rect x="625.9" y="532.8" width="148.4" height="147.50" fill="#f9f9f9"/>
<rect x="625.9" y="532.8" width="148.4" height="147.50" fill="#000" filter="url(#sky)"/>
<ellipse cx="709.10" cy="617.30" rx="31.52" ry="40.00" fill="#000" opacity="0.33" filter="url(#gb)"/>
<ellipse cx="709.10" cy="617.30" rx="21.28" ry="27.00" fill="#000" filter="url(#gb2)"/>
<ellipse cx="709.10" cy="617.30" rx="17.73" ry="22.50" fill="#000"/>
</g>
<ellipse cx="709.0" cy="616.5" rx="34.3" ry="39.1" fill="none" stroke="#ffd700" stroke-width="1.3"/>
<rect x="651.65" y="558.35" width="96.90" height="96.90" fill="none" stroke="#ff0000" stroke-width="1.1"/>
<path d="M700.10 570.10V599.30M700.10 614.30V643.50M663.40 606.80H692.60M707.60 606.80H736.80" stroke="#ff0000" stroke-width="1.1" fill="none"/>
<text class="s" x="700.10" y="546.28" font-size="10" text-anchor="middle" fill="#ff0000">N</text>
<text class="s" x="637.12" y="610.40" font-size="10" text-anchor="middle" fill="#ff0000">E</text>
<rect x="625.90" y="532.8" width="148.4" height="147.50" fill="none" stroke="#000" stroke-width="1"/>
<text class="s" x="635.50" y="696.00" font-size="10.3" text-anchor="middle">−4</text>
<text class="s" x="617.30" y="675.30" font-size="10.3" text-anchor="end">−4</text>
<text class="s" x="667.80" y="696.00" font-size="10.3" text-anchor="middle">−2</text>
<text class="s" x="617.30" y="643.00" font-size="10.3" text-anchor="end">−2</text>
<text class="s" x="700.10" y="696.00" font-size="10.3" text-anchor="middle">0</text>
<text class="s" x="617.30" y="610.70" font-size="10.3" text-anchor="end">0</text>
<text class="s" x="732.40" y="696.00" font-size="10.3" text-anchor="middle">2</text>
<text class="s" x="617.30" y="578.40" font-size="10.3" text-anchor="end">2</text>
<text class="s" x="764.70" y="696.00" font-size="10.3" text-anchor="middle">4</text>
<text class="s" x="617.30" y="546.10" font-size="10.3" text-anchor="end">4</text>
<path d="M635.50 680.3v4.5M625.90 671.40h-4.5M667.80 680.3v4.5M625.90 639.10h-4.5M700.10 680.3v4.5M625.90 606.80h-4.5M732.40 680.3v4.5M625.90 574.50h-4.5M764.70 680.3v4.5M625.90 542.20h-4.5" stroke="#000" stroke-width="1"/>
<text class="s" x="700.10" y="525.60" font-size="12.9" text-anchor="middle">DECaLS(24.0) r</text>
<text class="s" x="700.10" y="707.10" font-size="10.7" text-anchor="middle">m:18.5  re:2.3"  s:0.8"</text>
<text class="s" x="700.10" y="719.10" font-size="10.7" text-anchor="middle">EWr: 0, PLAE: 0.067</text>
<clipPath id="p4"><rect x="813.50" y="534.70" width="143.70" height="143.80"/></clipPath><g clip-path="url(#p4)">
<rect x="811.2" y="532.8" width="148.4" height="147.50" fill="#f2f2f2"/>
<rect x="811.2" y="532.8" width="148.4" height="147.50" fill="#000" filter="url(#skyz)"/>
<ellipse cx="891.80" cy="615.90" rx="27.30" ry="25.61" fill="#000" opacity="0.33" filter="url(#gb)"/>
<ellipse cx="891.80" cy="615.90" rx="22.68" ry="21.28" fill="#000" filter="url(#gb2)"/>
<ellipse cx="891.80" cy="615.90" rx="18.90" ry="17.73" fill="#000"/>
</g>
<ellipse cx="894.0" cy="615.8" rx="27.7" ry="26.2" fill="none" stroke="#ffd700" stroke-width="1.3"/>
<rect x="836.95" y="558.35" width="96.90" height="96.90" fill="none" stroke="#ff0000" stroke-width="1.1"/>
<path d="M885.40 570.10V599.30M885.40 614.30V643.50M848.70 606.80H877.90M892.90 606.80H922.10" stroke="#ff0000" stroke-width="1.1" fill="none"/>
<text class="s" x="885.40" y="546.28" font-size="10" text-anchor="middle" fill="#ff0000">N</text>
<text class="s" x="822.42" y="610.40" font-size="10" text-anchor="middle" fill="#ff0000">E</text>
<rect x="811.20" y="532.8" width="148.4" height="147.50" fill="none" stroke="#000" stroke-width="1"/>
<text class="s" x="820.80" y="696.00" font-size="10.3" text-anchor="middle">−4</text>
<text class="s" x="802.60" y="675.30" font-size="10.3" text-anchor="end">−4</text>
<text class="s" x="853.10" y="696.00" font-size="10.3" text-anchor="middle">−2</text>
<text class="s" x="802.60" y="643.00" font-size="10.3" text-anchor="end">−2</text>
<text class="s" x="885.40" y="696.00" font-size="10.3" text-anchor="middle">0</text>
<text class="s" x="802.60" y="610.70" font-size="10.3" text-anchor="end">0</text>
<text class="s" x="917.70" y="696.00" font-size="10.3" text-anchor="middle">2</text>
<text class="s" x="802.60" y="578.40" font-size="10.3" text-anchor="end">2</text>
<text class="s" x="950.00" y="696.00" font-size="10.3" text-anchor="middle">4</text>
<text class="s" x="802.60" y="546.10" font-size="10.3" text-anchor="end">4</text>
<path d="M820.80 680.3v4.5M811.20 671.40h-4.5M853.10 680.3v4.5M811.20 639.10h-4.5M885.40 680.3v4.5M811.20 606.80h-4.5M917.70 680.3v4.5M811.20 574.50h-4.5M950.00 680.3v4.5M811.20 542.20h-4.5" stroke="#000" stroke-width="1"/>
<text class="s" x="885.40" y="525.60" font-size="12.9" text-anchor="middle">DECaLS(24.0) z</text>
<text class="s" x="885.40" y="707.10" font-size="10.7" text-anchor="middle">m:18.1  re:1.7"  s:0.8"</text>
</svg>
</body></html>
